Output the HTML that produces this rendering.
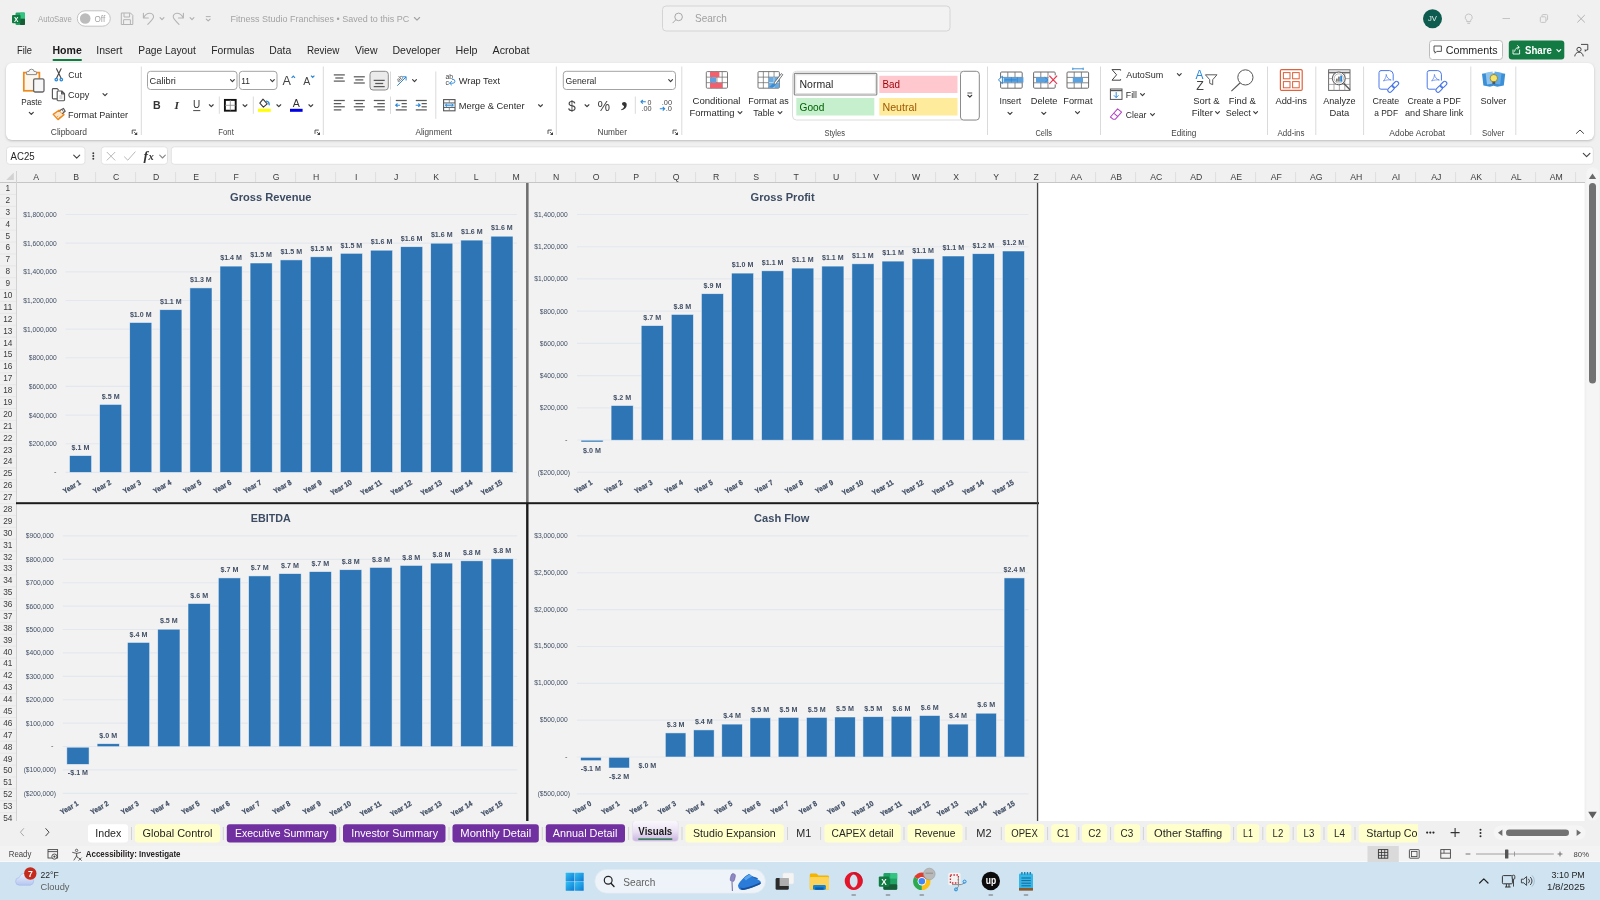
<!DOCTYPE html>
<html lang="en"><head><meta charset="utf-8"><title>Fitness Studio Franchises - Excel</title>
<style>
html,body{margin:0;padding:0;background:#f0f0f0;overflow:hidden}
body{width:1600px;height:900px;position:relative;font-family:"Liberation Sans", sans-serif;}
#app{position:absolute;left:0;top:0;width:1600px;height:900px;background:#f0f0f0;overflow:hidden}
#ribbon{position:absolute;left:6px;top:63px;width:1588px;height:76.5px;background:#fff;border-radius:6px;box-shadow:0 1px 2.5px rgba(0,0,0,.22)}
#status{position:absolute;left:0;top:846px;width:1600px;height:16px;background:#f3f3f3}
#taskbar{position:absolute;left:0;top:861px;width:1600px;height:39px;background:#cfe3f1;border-top:1.4px solid #f8f9fa;box-sizing:border-box}
svg{position:absolute;left:0;top:0;will-change:transform}
svg text{font-family:"Liberation Sans", sans-serif;white-space:pre}
</style></head><body>
<div id="app">
<div id="ribbon"></div><div id="status"></div><div id="taskbar"></div>
<svg width="1600" height="900" viewBox="0 0 1600 900">
<rect x="15.50" y="12.50" width="9.50" height="12.50" fill="#21a366" rx="1.2" />
<rect x="20.00" y="12.50" width="5.00" height="6.20" fill="#33c481" rx="1" />
<rect x="20.00" y="18.70" width="5.00" height="6.30" fill="#185c37" rx="1" />
<rect x="12.00" y="15.00" width="8.60" height="8.20" fill="#107c41" rx="1" />
<text x="16.30" y="21.70" font-size="6.6" fill="#fff" text-anchor="middle" font-weight="bold" >X</text>
<text x="38.00" y="22.30" font-size="9.4" fill="#a3a3a3" textLength="33.70" lengthAdjust="spacingAndGlyphs" >AutoSave</text>
<rect x="77.30" y="10.80" width="33.00" height="15.40" fill="#ffffff" rx="7.7" stroke="#c2c2c2" stroke-width="1" />
<circle cx="85.20" cy="18.50" r="5.3" fill="#bcbcbc"/>
<text x="94.50" y="21.90" font-size="8.8" fill="#a3a3a3" textLength="10.70" lengthAdjust="spacingAndGlyphs" >Off</text>
<path d="M121.3 13 h9.2 l2.3 2.3 v9.2 h-11.5 z" fill="none" stroke="#b3b3b3" stroke-width="1" stroke-linejoin="round"/>
<path d="M124 13.2 v3.8 h5.6 v-3.8 M123.6 24.3 v-4.6 h6.8 v4.6" fill="none" stroke="#b3b3b3" stroke-width="1" />
<path d="M143.4 13.3 v4.7 h4.9 M143.5 18 C145 15 147.5 13.2 150 13.3 C152.6 13.4 154.1 15.6 153.4 17.6 C152.8 19.3 150 22 147.8 24.3" fill="none" stroke="#b4b4b4" stroke-width="1.1" stroke-linecap="round" stroke-linejoin="round"/>
<path d="M160.10 17.65 L162.00 19.55 L163.90 17.65" fill="none" stroke="#b0b0b0" stroke-width="1.15" stroke-linecap="round" stroke-linejoin="round"/>
<path d="M183.4 13.3 v4.7 h-4.9 M183.3 18 C181.8 15 179.3 13.2 176.8 13.3 C174.2 13.4 172.7 15.6 173.4 17.6 C174 19.3 176.8 22 179 24.3" fill="none" stroke="#b4b4b4" stroke-width="1.1" stroke-linecap="round" stroke-linejoin="round"/>
<path d="M190.10 17.65 L192.00 19.55 L193.90 17.65" fill="none" stroke="#b0b0b0" stroke-width="1.15" stroke-linecap="round" stroke-linejoin="round"/>
<line x1="205.80" y1="16.60" x2="210.60" y2="16.60" stroke="#b0b0b0" stroke-width="1" />
<path d="M206.30 19.05 L208.20 20.95 L210.10 19.05" fill="none" stroke="#b0b0b0" stroke-width="1.15" stroke-linecap="round" stroke-linejoin="round"/>
<text x="230.50" y="22.30" font-size="9.4" fill="#a3a3a3" textLength="178.80" lengthAdjust="spacingAndGlyphs" >Fitness Studio Franchises • Saved to this PC</text>
<path d="M414.40 17.50 L417.00 20.10 L419.60 17.50" fill="none" stroke="#a3a3a3" stroke-width="1.15" stroke-linecap="round" stroke-linejoin="round"/>
<rect x="662.50" y="6.00" width="287.50" height="25.00" fill="#f2f2f2" rx="3.5" stroke="#d4d4d4" stroke-width="1" />
<circle cx="678.60" cy="16.90" r="3.8" fill="none" stroke="#a8a8a8" stroke-width="1"/>
<line x1="675.90" y1="19.70" x2="672.60" y2="23.10" stroke="#a8a8a8" stroke-width="1" />
<text x="695.00" y="21.80" font-size="10.2" fill="#a0a0a0" textLength="31.70" lengthAdjust="spacingAndGlyphs" >Search</text>
<circle cx="1432.50" cy="18.80" r="9.5" fill="#0e5c4f"/>
<text x="1428.00" y="21.40" font-size="6.6" fill="#e8f2ef" textLength="9.00" lengthAdjust="spacingAndGlyphs" >JV</text>
<path d="M1468.7 14 a3.4 3.4 0 0 1 2 6.2 v1.4 h-4 v-1.4 a3.4 3.4 0 0 1 2 -6.2 z M1467.3 23.3 h2.8" fill="none" stroke="#c2c2c2" stroke-width="1" />
<line x1="1502.50" y1="18.50" x2="1510.00" y2="18.50" stroke="#c4c4c4" stroke-width="1" />
<rect x="1540.30" y="16.80" width="5.60" height="5.60" fill="none" rx="1" stroke="#c4c4c4" stroke-width="1" />
<path d="M1542 16.6 v-1 a1 1 0 0 1 1 -1 h3.6 a1 1 0 0 1 1 1 v3.6 a1 1 0 0 1 -1 1 h-0.8" fill="none" stroke="#c4c4c4" stroke-width="1" />
<path d="M1577.4 15 l7.4 7.4 M1584.8 15 l-7.4 7.4" fill="none" stroke="#b0b0b0" stroke-width="1" />
<text x="17.00" y="54.30" font-size="10.6" fill="#262626" textLength="15.00" lengthAdjust="spacingAndGlyphs" >File</text>
<text x="52.50" y="54.30" font-size="10.6" fill="#1a1a1a" font-weight="bold" textLength="29.30" lengthAdjust="spacingAndGlyphs" >Home</text>
<rect x="52.50" y="59.00" width="29.50" height="2.00" fill="#107c41" rx="1" />
<text x="96.30" y="54.30" font-size="10.6" fill="#262626" textLength="26.20" lengthAdjust="spacingAndGlyphs" >Insert</text>
<text x="138.30" y="54.30" font-size="10.6" fill="#262626" textLength="57.50" lengthAdjust="spacingAndGlyphs" >Page Layout</text>
<text x="211.30" y="54.30" font-size="10.6" fill="#262626" textLength="43.00" lengthAdjust="spacingAndGlyphs" >Formulas</text>
<text x="269.30" y="54.30" font-size="10.6" fill="#262626" textLength="22.00" lengthAdjust="spacingAndGlyphs" >Data</text>
<text x="307.00" y="54.30" font-size="10.6" fill="#262626" textLength="32.30" lengthAdjust="spacingAndGlyphs" >Review</text>
<text x="355.00" y="54.30" font-size="10.6" fill="#262626" textLength="22.50" lengthAdjust="spacingAndGlyphs" >View</text>
<text x="392.50" y="54.30" font-size="10.6" fill="#262626" textLength="48.00" lengthAdjust="spacingAndGlyphs" >Developer</text>
<text x="455.50" y="54.30" font-size="10.6" fill="#262626" textLength="22.00" lengthAdjust="spacingAndGlyphs" >Help</text>
<text x="492.50" y="54.30" font-size="10.6" fill="#262626" textLength="37.00" lengthAdjust="spacingAndGlyphs" >Acrobat</text>
<rect x="1429.50" y="40.50" width="73.00" height="19.00" fill="#fff" rx="3" stroke="#bcbcbc" stroke-width="1" />
<path d="M1434 46 h7.4 v5.4 h-4.6 l-1.8 1.8 v-1.8 h-1 z" fill="none" stroke="#444" stroke-width="0.9" stroke-linejoin="round"/>
<text x="1445.80" y="53.80" font-size="10.4" fill="#262626" textLength="51.70" lengthAdjust="spacingAndGlyphs" >Comments</text>
<rect x="1508.80" y="40.50" width="55.50" height="19.00" fill="#137a43" rx="3" />
<path d="M1513 50 v4 h6.6 v-4 M1514.6 51.2 c0.6 -2.6 2 -3.8 4.2 -3.8 M1517.6 45.6 l1.6 1.8 l-1.8 1.6" fill="none" stroke="#fff" stroke-width="0.9" stroke-linecap="round" stroke-linejoin="round"/>
<text x="1525.00" y="53.80" font-size="10.4" fill="#fff" font-weight="bold" textLength="26.80" lengthAdjust="spacingAndGlyphs" >Share</text>
<path d="M1556.90 49.65 L1558.80 51.55 L1560.70 49.65" fill="none" stroke="#fff" stroke-width="1.15" stroke-linecap="round" stroke-linejoin="round"/>
<circle cx="1579.00" cy="49.40" r="2.1" fill="none" stroke="#333" stroke-width="0.9"/>
<path d="M1574.8 56.4 a4.2 4.2 0 0 1 8.4 0" fill="none" stroke="#333" stroke-width="0.9" />
<path d="M1581 44.4 h6.8 v5.4 h-1.2 l-1.3 1.5 v-1.5 h-0.6" fill="none" stroke="#333" stroke-width="0.9" stroke-linejoin="round"/>
<rect x="23.80" y="72.60" width="15.60" height="18.20" fill="#fdf6ec" stroke="#ee8a1d" stroke-width="1.7" />
<path d="M26.6 74.6 v-2.2 a1 1 0 0 1 1 -1 h1.4 a2.5 2.2 0 0 1 5 0 h1.4 a1 1 0 0 1 1 1 v2.2 z" fill="#f6f6f6" stroke="#8a8a8a" stroke-width="1" />
<rect x="33.60" y="78.80" width="10.40" height="13.20" fill="#f7f7f7" rx="1.4" stroke="#666666" stroke-width="1.3" />
<text x="21.30" y="104.80" font-size="9.6" fill="#2b2b2b" textLength="20.70" lengthAdjust="spacingAndGlyphs" >Paste</text>
<path d="M29.30 112.30 L31.30 114.30 L33.30 112.30" fill="none" stroke="#3a3a3a" stroke-width="1.15" stroke-linecap="round" stroke-linejoin="round"/>
<path d="M56.5 68.8 l4.4 9 M61.1 68.8 l-4.4 9" fill="none" stroke="#4a4a4a" stroke-width="1.15" stroke-linecap="round"/>
<circle cx="56.30" cy="79.60" r="1.25" fill="none" stroke="#2b88d8" stroke-width="1.3"/>
<circle cx="61.30" cy="79.60" r="1.25" fill="none" stroke="#2b88d8" stroke-width="1.3"/>
<text x="68.30" y="78.30" font-size="9.6" fill="#2b2b2b" textLength="13.50" lengthAdjust="spacingAndGlyphs" >Cut</text>
<path d="M56.6 98.8 h-3.4 a0.8 0.8 0 0 1 -0.8 -0.8 v-8.6 a0.8 0.8 0 0 1 0.8 -0.8 h4 l1.2 1.2" fill="none" stroke="#555" stroke-width="1.15" stroke-linejoin="round" stroke-linecap="round"/>
<path d="M58 91 h3.8 l2.7 2.7 v6.2 a0.8 0.8 0 0 1 -0.8 0.8 h-5.7 a0.8 0.8 0 0 1 -0.8 -0.8 v-8.1 a0.8 0.8 0 0 1 0.8 -0.8 z M61.6 91.2 v2.7 h2.7" fill="#fff" stroke="#555" stroke-width="1.15" stroke-linejoin="round"/>
<path d="M59.4 96 h3 M59.4 98 h3" fill="none" stroke="#9a9a9a" stroke-width="0.8" />
<text x="68.00" y="98.00" font-size="9.6" fill="#2b2b2b" textLength="21.30" lengthAdjust="spacingAndGlyphs" >Copy</text>
<path d="M103.00 93.60 L105.00 95.60 L107.00 93.60" fill="none" stroke="#3a3a3a" stroke-width="1.15" stroke-linecap="round" stroke-linejoin="round"/>
<path d="M53.2 114.4 l5.8 -4.2 l5 4.4 l-6 5 z" fill="#fbe5cb" stroke="#ee8a1d" stroke-width="1.4" stroke-linejoin="round"/>
<path d="M56.6 117.4 l1.6 -1.4 M58.8 118.2 l1.6 -1.4" fill="none" stroke="#ee8a1d" stroke-width="0.8" />
<path d="M59.8 110.4 l3.6 -2 l1.8 2.8 l-3 2.4" fill="#fff" stroke="#555" stroke-width="1.1" stroke-linejoin="round"/>
<path d="M62 109.4 l1.4 2.4" fill="none" stroke="#555" stroke-width="0.8" />
<text x="68.00" y="117.60" font-size="9.6" fill="#2b2b2b" textLength="60.00" lengthAdjust="spacingAndGlyphs" >Format Painter</text>
<text x="50.80" y="135.20" font-size="8.9" fill="#444444" textLength="36.20" lengthAdjust="spacingAndGlyphs" >Clipboard</text>
<path d="M132.2 133.9 v-3.8 h3.8" fill="none" stroke="#444" stroke-width="0.9" />
<path d="M134.0 131.9 l3 3" fill="none" stroke="#444" stroke-width="0.9" />
<path d="M137.2 132.1 v3 h-3 z" fill="#444" />
<line x1="141.30" y1="66.50" x2="141.30" y2="135.00" stroke="#dadada" stroke-width="1" />
<rect x="147.50" y="71.30" width="89.50" height="18.20" fill="#fff" rx="3" stroke="#a3a3a3" stroke-width="1" />
<text x="149.60" y="84.30" font-size="9.6" fill="#2b2b2b" textLength="26.20" lengthAdjust="spacingAndGlyphs" >Calibri</text>
<path d="M230.50 79.65 L232.40 81.55 L234.30 79.65" fill="none" stroke="#3a3a3a" stroke-width="1.15" stroke-linecap="round" stroke-linejoin="round"/>
<rect x="239.30" y="71.30" width="37.70" height="18.20" fill="#fff" rx="3" stroke="#a3a3a3" stroke-width="1" />
<text x="241.30" y="84.30" font-size="9.6" fill="#2b2b2b" textLength="8.70" lengthAdjust="spacingAndGlyphs" >11</text>
<path d="M270.50 79.65 L272.40 81.55 L274.30 79.65" fill="none" stroke="#3a3a3a" stroke-width="1.15" stroke-linecap="round" stroke-linejoin="round"/>
<text x="282.40" y="85.20" font-size="12.6" fill="#444" >A</text>
<path d="M291.6 77.8 l1.7 -1.8 l1.7 1.8" fill="none" stroke="#2b88d8" stroke-width="1.2" />
<text x="303.20" y="85.20" font-size="10.6" fill="#444" >A</text>
<path d="M311 75.6 l1.7 1.8 l1.7 -1.8" fill="none" stroke="#2b88d8" stroke-width="1.2" />
<text x="156.80" y="109.00" font-size="10.6" fill="#333" text-anchor="middle" font-weight="bold" >B</text>
<text x="176.60" y="109.00" font-size="11.4" fill="#333" text-anchor="middle" font-weight="bold" font-style="italic" style='font-family:"Liberation Serif", serif' >I</text>
<text x="196.70" y="108.40" font-size="10" fill="#333" text-anchor="middle" >U</text>
<line x1="193.20" y1="110.60" x2="200.30" y2="110.60" stroke="#333" stroke-width="0.9" />
<path d="M209.40 104.75 L211.30 106.65 L213.20 104.75" fill="none" stroke="#3a3a3a" stroke-width="1.15" stroke-linecap="round" stroke-linejoin="round"/>
<line x1="219.30" y1="96.50" x2="219.30" y2="113.80" stroke="#dadada" stroke-width="1" />
<rect x="224.90" y="99.90" width="10.80" height="10.80" fill="none" stroke="#111" stroke-width="1.9" />
<line x1="230.30" y1="100.00" x2="230.30" y2="110.60" stroke="#8a8a8a" stroke-width="0.8" />
<line x1="225.00" y1="105.30" x2="235.60" y2="105.30" stroke="#8a8a8a" stroke-width="0.8" />
<path d="M243.10 104.75 L245.00 106.65 L246.90 104.75" fill="none" stroke="#3a3a3a" stroke-width="1.15" stroke-linecap="round" stroke-linejoin="round"/>
<line x1="253.30" y1="96.50" x2="253.30" y2="113.80" stroke="#dadada" stroke-width="1" />
<path d="M263 99.2 l4.2 4.6 l-3.8 3.4 l-3.6 -4 z" fill="none" stroke="#3a3a3a" stroke-width="1.1" stroke-linejoin="round"/>
<path d="M266.4 101.2 c1.8 0.2 2.8 1.4 2.8 3.6" fill="none" stroke="#2b88d8" stroke-width="1.3" stroke-linecap="round"/>
<rect x="258.00" y="108.80" width="12.80" height="3.00" fill="#ffff00" />
<path d="M276.90 104.75 L278.80 106.65 L280.70 104.75" fill="none" stroke="#3a3a3a" stroke-width="1.15" stroke-linecap="round" stroke-linejoin="round"/>
<text x="296.20" y="107.20" font-size="10.6" fill="#333" text-anchor="middle" >A</text>
<rect x="290.00" y="108.80" width="12.60" height="3.00" fill="#0000e6" />
<path d="M308.90 104.75 L310.80 106.65 L312.70 104.75" fill="none" stroke="#3a3a3a" stroke-width="1.15" stroke-linecap="round" stroke-linejoin="round"/>
<text x="218.30" y="135.20" font-size="8.9" fill="#444444" textLength="15.50" lengthAdjust="spacingAndGlyphs" >Font</text>
<path d="M315.0 133.9 v-3.8 h3.8" fill="none" stroke="#444" stroke-width="0.9" />
<path d="M316.8 131.9 l3 3" fill="none" stroke="#444" stroke-width="0.9" />
<path d="M320.0 132.1 v3 h-3 z" fill="#444" />
<line x1="323.30" y1="66.50" x2="323.30" y2="135.00" stroke="#dadada" stroke-width="1" />
<line x1="333.80" y1="74.90" x2="344.80" y2="74.90" stroke="#5a5a5a" stroke-width="1.25" />
<line x1="335.30" y1="78.00" x2="343.30" y2="78.00" stroke="#5a5a5a" stroke-width="1.25" />
<line x1="333.80" y1="81.10" x2="344.80" y2="81.10" stroke="#5a5a5a" stroke-width="1.25" />
<line x1="353.80" y1="76.80" x2="364.80" y2="76.80" stroke="#5a5a5a" stroke-width="1.25" />
<line x1="355.30" y1="79.90" x2="363.30" y2="79.90" stroke="#5a5a5a" stroke-width="1.25" />
<line x1="353.80" y1="83.00" x2="364.80" y2="83.00" stroke="#5a5a5a" stroke-width="1.25" />
<rect x="370.00" y="71.30" width="18.30" height="18.70" fill="#ebebeb" rx="3" stroke="#8a8a8a" stroke-width="1" />
<line x1="373.70" y1="80.40" x2="384.70" y2="80.40" stroke="#5a5a5a" stroke-width="1.25" />
<line x1="375.20" y1="83.50" x2="383.20" y2="83.50" stroke="#5a5a5a" stroke-width="1.25" />
<line x1="373.70" y1="86.60" x2="384.70" y2="86.60" stroke="#5a5a5a" stroke-width="1.25" />
<line x1="390.50" y1="71.50" x2="390.50" y2="89.50" stroke="#dadada" stroke-width="1" />
<text x="396.20" y="81.50" font-size="6.6" fill="#555" transform="rotate(-42 399 79)">ab</text>
<path d="M397.5 85.5 l8.4 -8.4 M402.8 76.8 h3.3 v3.3" fill="none" stroke="#2b88d8" stroke-width="1" stroke-linecap="round" stroke-linejoin="round"/>
<path d="M412.60 79.65 L414.50 81.55 L416.40 79.65" fill="none" stroke="#3a3a3a" stroke-width="1.15" stroke-linecap="round" stroke-linejoin="round"/>
<line x1="435.80" y1="71.50" x2="435.80" y2="118.80" stroke="#dadada" stroke-width="1" />
<text x="445.40" y="79.00" font-size="6.8" fill="#444" >ab</text>
<text x="445.40" y="85.20" font-size="6.8" fill="#444" >c</text>
<path d="M449.6 83.2 h3.4 a1.9 1.9 0 0 0 0 -3.8 h-0.6 M451.6 81.4 l-2 1.8 l2 1.8" fill="none" stroke="#2b88d8" stroke-width="0.9" stroke-linecap="round" stroke-linejoin="round"/>
<text x="458.80" y="84.30" font-size="9.6" fill="#2b2b2b" textLength="41.20" lengthAdjust="spacingAndGlyphs" >Wrap Text</text>
<line x1="333.80" y1="100.50" x2="344.80" y2="100.50" stroke="#5a5a5a" stroke-width="1.25" />
<line x1="333.80" y1="103.63" x2="341.30" y2="103.63" stroke="#5a5a5a" stroke-width="1.25" />
<line x1="333.80" y1="106.77" x2="344.80" y2="106.77" stroke="#5a5a5a" stroke-width="1.25" />
<line x1="333.80" y1="109.89" x2="341.30" y2="109.89" stroke="#5a5a5a" stroke-width="1.25" />
<line x1="353.80" y1="100.50" x2="364.80" y2="100.50" stroke="#5a5a5a" stroke-width="1.25" />
<line x1="355.55" y1="103.63" x2="363.05" y2="103.63" stroke="#5a5a5a" stroke-width="1.25" />
<line x1="353.80" y1="106.77" x2="364.80" y2="106.77" stroke="#5a5a5a" stroke-width="1.25" />
<line x1="355.55" y1="109.89" x2="363.05" y2="109.89" stroke="#5a5a5a" stroke-width="1.25" />
<line x1="373.80" y1="100.50" x2="384.80" y2="100.50" stroke="#5a5a5a" stroke-width="1.25" />
<line x1="377.30" y1="103.63" x2="384.80" y2="103.63" stroke="#5a5a5a" stroke-width="1.25" />
<line x1="373.80" y1="106.77" x2="384.80" y2="106.77" stroke="#5a5a5a" stroke-width="1.25" />
<line x1="377.30" y1="109.89" x2="384.80" y2="109.89" stroke="#5a5a5a" stroke-width="1.25" />
<line x1="390.50" y1="96.50" x2="390.50" y2="113.80" stroke="#dadada" stroke-width="1" />
<line x1="395.80" y1="100.50" x2="406.80" y2="100.50" stroke="#5a5a5a" stroke-width="1.25" />
<line x1="401.60" y1="103.60" x2="406.80" y2="103.60" stroke="#5a5a5a" stroke-width="1.25" />
<line x1="401.60" y1="106.80" x2="406.80" y2="106.80" stroke="#5a5a5a" stroke-width="1.25" />
<line x1="395.80" y1="109.90" x2="406.80" y2="109.90" stroke="#5a5a5a" stroke-width="1.25" />
<path d="M400.1 105.2 h-4.2 M397.5 103.5 l-1.8 1.7 l1.8 1.7" fill="none" stroke="#2b88d8" stroke-width="1.15" />
<line x1="415.80" y1="100.50" x2="426.80" y2="100.50" stroke="#5a5a5a" stroke-width="1.25" />
<line x1="421.60" y1="103.60" x2="426.80" y2="103.60" stroke="#5a5a5a" stroke-width="1.25" />
<line x1="421.60" y1="106.80" x2="426.80" y2="106.80" stroke="#5a5a5a" stroke-width="1.25" />
<line x1="415.80" y1="109.90" x2="426.80" y2="109.90" stroke="#5a5a5a" stroke-width="1.25" />
<path d="M415.7 105.2 h4.2 M418.3 103.5 l1.8 1.7 l-1.8 1.7" fill="none" stroke="#2b88d8" stroke-width="1.15" />
<rect x="443.60" y="99.60" width="11.40" height="11.20" fill="#fff" stroke="#555" stroke-width="1.1" />
<rect x="444.20" y="103.10" width="10.20" height="4.20" fill="#d6e9f8" />
<line x1="443.60" y1="102.90" x2="455.00" y2="102.90" stroke="#555" stroke-width="0.9" />
<line x1="443.60" y1="107.50" x2="455.00" y2="107.50" stroke="#555" stroke-width="0.9" />
<line x1="449.30" y1="99.60" x2="449.30" y2="102.90" stroke="#777" stroke-width="0.8" />
<line x1="449.30" y1="107.50" x2="449.30" y2="110.80" stroke="#777" stroke-width="0.8" />
<path d="M445.4 105.2 h7.8 M447 103.8 l-1.6 1.4 l1.6 1.4 M451.6 103.8 l1.6 1.4 l-1.6 1.4" fill="none" stroke="#2b88d8" stroke-width="1" />
<text x="458.80" y="109.30" font-size="9.6" fill="#2b2b2b" textLength="65.70" lengthAdjust="spacingAndGlyphs" >Merge &amp; Center</text>
<path d="M538.60 104.75 L540.50 106.65 L542.40 104.75" fill="none" stroke="#3a3a3a" stroke-width="1.15" stroke-linecap="round" stroke-linejoin="round"/>
<text x="415.50" y="135.20" font-size="8.9" fill="#444444" textLength="36.30" lengthAdjust="spacingAndGlyphs" >Alignment</text>
<path d="M548.0 133.9 v-3.8 h3.8" fill="none" stroke="#444" stroke-width="0.9" />
<path d="M549.8 131.9 l3 3" fill="none" stroke="#444" stroke-width="0.9" />
<path d="M553.0 132.1 v3 h-3 z" fill="#444" />
<line x1="556.30" y1="66.50" x2="556.30" y2="135.00" stroke="#dadada" stroke-width="1" />
<rect x="563.30" y="71.30" width="112.20" height="18.20" fill="#fff" rx="3" stroke="#a3a3a3" stroke-width="1" />
<text x="565.50" y="84.30" font-size="9.6" fill="#2b2b2b" textLength="30.80" lengthAdjust="spacingAndGlyphs" >General</text>
<path d="M668.70 79.65 L670.60 81.55 L672.50 79.65" fill="none" stroke="#3a3a3a" stroke-width="1.15" stroke-linecap="round" stroke-linejoin="round"/>
<text x="572.00" y="110.60" font-size="14" fill="#454545" text-anchor="middle" >$</text>
<path d="M585.10 104.75 L587.00 106.65 L588.90 104.75" fill="none" stroke="#3a3a3a" stroke-width="1.15" stroke-linecap="round" stroke-linejoin="round"/>
<text x="597.60" y="110.80" font-size="14.6" fill="#454545" textLength="12.60" lengthAdjust="spacingAndGlyphs" >%</text>
<text x="624.40" y="106.40" font-size="27" fill="#333" text-anchor="middle" font-weight="bold" style='font-family:"Liberation Serif", serif' >,</text>
<line x1="635.30" y1="96.50" x2="635.30" y2="113.80" stroke="#dadada" stroke-width="1" />
<path d="M641 101.8 h4.8 M642.8 100 l-1.8 1.8 l1.8 1.8" fill="none" stroke="#2b88d8" stroke-width="1.1" />
<text x="647.40" y="104.60" font-size="7" fill="#444" >0</text>
<text x="641.40" y="111.40" font-size="7" fill="#444" textLength="10.20" lengthAdjust="spacingAndGlyphs" >.00</text>
<text x="661.80" y="104.60" font-size="7" fill="#444" textLength="10.20" lengthAdjust="spacingAndGlyphs" >.00</text>
<path d="M659.8 108.8 h4.8 M662.8 107 l1.8 1.8 l-1.8 1.8" fill="none" stroke="#2b88d8" stroke-width="1.1" />
<text x="665.80" y="111.40" font-size="7" fill="#444" textLength="6.20" lengthAdjust="spacingAndGlyphs" >.0</text>
<text x="597.50" y="135.20" font-size="8.9" fill="#444444" textLength="29.50" lengthAdjust="spacingAndGlyphs" >Number</text>
<path d="M673.0 133.9 v-3.8 h3.8" fill="none" stroke="#444" stroke-width="0.9" />
<path d="M674.8 131.9 l3 3" fill="none" stroke="#444" stroke-width="0.9" />
<path d="M678.0 132.1 v3 h-3 z" fill="#444" />
<line x1="681.80" y1="66.50" x2="681.80" y2="135.00" stroke="#dadada" stroke-width="1" />
<rect x="706.30" y="71.60" width="21.20" height="16.60" fill="#fff" rx="1" stroke="#6a6a6a" stroke-width="0.9" />
<line x1="711.60" y1="71.60" x2="711.60" y2="88.20" stroke="#6a6a6a" stroke-width="0.7200000000000001" />
<line x1="716.90" y1="71.60" x2="716.90" y2="88.20" stroke="#6a6a6a" stroke-width="0.7200000000000001" />
<line x1="722.20" y1="71.60" x2="722.20" y2="88.20" stroke="#6a6a6a" stroke-width="0.7200000000000001" />
<line x1="706.30" y1="77.13" x2="727.50" y2="77.13" stroke="#6a6a6a" stroke-width="0.7200000000000001" />
<line x1="706.30" y1="82.67" x2="727.50" y2="82.67" stroke="#6a6a6a" stroke-width="0.7200000000000001" />
<rect x="710.00" y="71.80" width="9.40" height="5.30" fill="#f0606d" />
<rect x="710.00" y="77.30" width="6.00" height="5.40" fill="#5fa2dd" />
<rect x="710.00" y="82.90" width="12.40" height="5.20" fill="#f0606d" />
<text x="692.50" y="103.80" font-size="9.6" fill="#2b2b2b" textLength="48.00" lengthAdjust="spacingAndGlyphs" >Conditional</text>
<text x="689.50" y="116.30" font-size="9.6" fill="#2b2b2b" textLength="45.00" lengthAdjust="spacingAndGlyphs" >Formatting</text>
<path d="M738.10 111.65 L740.00 113.55 L741.90 111.65" fill="none" stroke="#3a3a3a" stroke-width="1.15" stroke-linecap="round" stroke-linejoin="round"/>
<rect x="758.00" y="71.60" width="21.40" height="16.60" fill="#fff" rx="1" stroke="#6a6a6a" stroke-width="0.9" />
<line x1="763.35" y1="71.60" x2="763.35" y2="88.20" stroke="#6a6a6a" stroke-width="0.7200000000000001" />
<line x1="768.70" y1="71.60" x2="768.70" y2="88.20" stroke="#6a6a6a" stroke-width="0.7200000000000001" />
<line x1="774.05" y1="71.60" x2="774.05" y2="88.20" stroke="#6a6a6a" stroke-width="0.7200000000000001" />
<line x1="758.00" y1="77.13" x2="779.40" y2="77.13" stroke="#6a6a6a" stroke-width="0.7200000000000001" />
<line x1="758.00" y1="82.67" x2="779.40" y2="82.67" stroke="#6a6a6a" stroke-width="0.7200000000000001" />
<rect x="768.80" y="77.20" width="10.40" height="10.80" fill="#4f9ede" opacity="0.85"/>
<line x1="774.00" y1="77.20" x2="774.00" y2="88.00" stroke="#fff" stroke-width="0.6" />
<line x1="768.80" y1="82.60" x2="779.20" y2="82.60" stroke="#fff" stroke-width="0.6" />
<path d="M781.4 73.6 l-7.6 9.6 l1.6 1.3 l7.4 -9.8 z" fill="#fff" stroke="#555" stroke-width="0.8" stroke-linejoin="round"/>
<path d="M773.6 83.4 c-2.2 0.2 -2.2 2.6 -4.6 3.4 c2.4 1.2 5.6 0.6 6.4 -2 z" fill="#3b8ad4" />
<text x="748.30" y="103.80" font-size="9.6" fill="#2b2b2b" textLength="40.50" lengthAdjust="spacingAndGlyphs" >Format as</text>
<text x="753.30" y="116.30" font-size="9.6" fill="#2b2b2b" textLength="21.20" lengthAdjust="spacingAndGlyphs" >Table</text>
<path d="M778.10 111.65 L780.00 113.55 L781.90 111.65" fill="none" stroke="#3a3a3a" stroke-width="1.15" stroke-linecap="round" stroke-linejoin="round"/>
<rect x="792.50" y="71.30" width="186.80" height="48.70" fill="#fff" rx="4" stroke="#dcdcdc" stroke-width="1" />
<rect x="794.30" y="73.30" width="82.50" height="21.70" fill="#fff" rx="1" stroke="#8c8c8c" stroke-width="1.2" />
<rect x="795.80" y="74.80" width="79.50" height="18.70" fill="#fff" stroke="#d9d9d9" stroke-width="0.8" />
<text x="799.50" y="88.00" font-size="10.8" fill="#1f1f1f" textLength="33.80" lengthAdjust="spacingAndGlyphs" >Normal</text>
<rect x="879.30" y="75.80" width="78.20" height="17.20" fill="#ffc7ce" />
<text x="882.50" y="88.00" font-size="10.8" fill="#9c0006" textLength="17.50" lengthAdjust="spacingAndGlyphs" >Bad</text>
<rect x="796.30" y="98.00" width="78.00" height="17.50" fill="#c6efce" />
<text x="799.50" y="111.20" font-size="10.8" fill="#006100" textLength="24.80" lengthAdjust="spacingAndGlyphs" >Good</text>
<rect x="879.30" y="98.00" width="78.20" height="17.50" fill="#ffeb9c" />
<text x="882.50" y="111.20" font-size="10.8" fill="#9c5700" textLength="34.30" lengthAdjust="spacingAndGlyphs" >Neutral</text>
<rect x="960.50" y="71.30" width="18.80" height="48.70" fill="#fff" rx="3" stroke="#8c8c8c" stroke-width="1" />
<line x1="967.40" y1="93.00" x2="972.20" y2="93.00" stroke="#444" stroke-width="0.9" />
<path d="M967.90 95.25 L969.80 97.15 L971.70 95.25" fill="none" stroke="#3a3a3a" stroke-width="1.15" stroke-linecap="round" stroke-linejoin="round"/>
<text x="824.50" y="135.60" font-size="8.9" fill="#444444" textLength="20.50" lengthAdjust="spacingAndGlyphs" >Styles</text>
<line x1="987.50" y1="66.50" x2="987.50" y2="135.00" stroke="#dadada" stroke-width="1" />
<rect x="1000.60" y="72.00" width="21.60" height="16.20" fill="#fff" rx="1" stroke="#6a6a6a" stroke-width="1" />
<line x1="1007.80" y1="72.00" x2="1007.80" y2="88.20" stroke="#6a6a6a" stroke-width="0.8" />
<line x1="1015.00" y1="72.00" x2="1015.00" y2="88.20" stroke="#6a6a6a" stroke-width="0.8" />
<line x1="1000.60" y1="77.40" x2="1022.20" y2="77.40" stroke="#6a6a6a" stroke-width="0.8" />
<line x1="1000.60" y1="82.80" x2="1022.20" y2="82.80" stroke="#6a6a6a" stroke-width="0.8" />
<rect x="1003.60" y="77.20" width="19.80" height="5.40" fill="#5ba1de" />
<path d="M1004.6 79.9 h12 M1002.4 76.2 l-4 3.7 l4 3.7 z" fill="#fff" stroke="#2b88d8" stroke-width="1" stroke-linejoin="round"/>
<line x1="1011.40" y1="77.20" x2="1011.40" y2="82.60" stroke="#2f7fc6" stroke-width="0.6" />
<line x1="1017.40" y1="77.20" x2="1017.40" y2="82.60" stroke="#2f7fc6" stroke-width="0.6" />
<text x="999.50" y="104.40" font-size="9.6" fill="#2b2b2b" textLength="21.80" lengthAdjust="spacingAndGlyphs" >Insert</text>
<path d="M1008.00 112.30 L1010.00 114.30 L1012.00 112.30" fill="none" stroke="#3a3a3a" stroke-width="1.15" stroke-linecap="round" stroke-linejoin="round"/>
<rect x="1033.60" y="72.00" width="21.60" height="16.20" fill="#fff" rx="1" stroke="#6a6a6a" stroke-width="1" />
<line x1="1040.80" y1="72.00" x2="1040.80" y2="88.20" stroke="#6a6a6a" stroke-width="0.8" />
<line x1="1048.00" y1="72.00" x2="1048.00" y2="88.20" stroke="#6a6a6a" stroke-width="0.8" />
<line x1="1033.60" y1="77.40" x2="1055.20" y2="77.40" stroke="#6a6a6a" stroke-width="0.8" />
<line x1="1033.60" y1="82.80" x2="1055.20" y2="82.80" stroke="#6a6a6a" stroke-width="0.8" />
<rect x="1036.00" y="77.20" width="12.00" height="5.40" fill="#5ba1de" />
<path d="M1044.6 77.2 l3.4 2.7 l-3.4 2.7" fill="none" stroke="#2f7fc6" stroke-width="0.7" />
<rect x="1048.60" y="75.40" width="8.60" height="9.00" fill="#fff" />
<path d="M1049.6 76 l7.2 7.6 M1056.8 76 l-7.2 7.6" fill="none" stroke="#e8384f" stroke-width="1.1" stroke-linecap="round"/>
<text x="1030.80" y="104.40" font-size="9.6" fill="#2b2b2b" textLength="26.70" lengthAdjust="spacingAndGlyphs" >Delete</text>
<path d="M1041.80 112.30 L1043.80 114.30 L1045.80 112.30" fill="none" stroke="#3a3a3a" stroke-width="1.15" stroke-linecap="round" stroke-linejoin="round"/>
<path d="M1072.8 67.6 v2.4 M1072.8 68.8 h10.4 M1083.2 67.6 v2.4" fill="none" stroke="#2b88d8" stroke-width="0.9" />
<rect x="1067.00" y="72.00" width="21.60" height="16.20" fill="#fff" rx="1" stroke="#6a6a6a" stroke-width="1" />
<line x1="1074.20" y1="72.00" x2="1074.20" y2="88.20" stroke="#6a6a6a" stroke-width="0.8" />
<line x1="1081.40" y1="72.00" x2="1081.40" y2="88.20" stroke="#6a6a6a" stroke-width="0.8" />
<line x1="1067.00" y1="77.40" x2="1088.60" y2="77.40" stroke="#6a6a6a" stroke-width="0.8" />
<line x1="1067.00" y1="82.80" x2="1088.60" y2="82.80" stroke="#6a6a6a" stroke-width="0.8" />
<rect x="1072.80" y="77.20" width="10.20" height="5.40" fill="#5ba1de" />
<text x="1063.30" y="103.80" font-size="9.6" fill="#2b2b2b" textLength="29.20" lengthAdjust="spacingAndGlyphs" >Format</text>
<path d="M1075.50 111.60 L1077.50 113.60 L1079.50 111.60" fill="none" stroke="#3a3a3a" stroke-width="1.15" stroke-linecap="round" stroke-linejoin="round"/>
<text x="1035.50" y="135.60" font-size="8.9" fill="#444444" textLength="16.50" lengthAdjust="spacingAndGlyphs" >Cells</text>
<line x1="1100.50" y1="66.50" x2="1100.50" y2="135.00" stroke="#dadada" stroke-width="1" />
<path d="M1120.6 70.6 v-1 h-8.6 l4.6 5.2 l-4.6 5.4 h8.6 v-1" fill="none" stroke="#444" stroke-width="1" stroke-linejoin="round"/>
<text x="1126.30" y="78.00" font-size="9.6" fill="#2b2b2b" textLength="37.00" lengthAdjust="spacingAndGlyphs" >AutoSum</text>
<path d="M1177.40 73.65 L1179.30 75.55 L1181.20 73.65" fill="none" stroke="#3a3a3a" stroke-width="1.15" stroke-linecap="round" stroke-linejoin="round"/>
<rect x="1110.40" y="89.00" width="11.60" height="10.40" fill="#fff" stroke="#555" stroke-width="1" />
<line x1="1110.40" y1="90.60" x2="1122.00" y2="90.60" stroke="#555" stroke-width="1.2" />
<path d="M1116.2 92.4 v5 M1114.2 95.6 l2 2 l2 -2" fill="none" stroke="#2b88d8" stroke-width="0.95" stroke-linecap="round" stroke-linejoin="round"/>
<text x="1125.80" y="98.00" font-size="9.6" fill="#2b2b2b" textLength="11.20" lengthAdjust="spacingAndGlyphs" >Fill</text>
<path d="M1140.60 93.65 L1142.50 95.55 L1144.40 93.65" fill="none" stroke="#3a3a3a" stroke-width="1.15" stroke-linecap="round" stroke-linejoin="round"/>
<path d="M1117.6 108.8 l4 3.4 l-6.2 7 l-2.4 0 l-2.6 -2.2 z M1113.8 113.2 l4 3.4" fill="none" stroke="#b146c2" stroke-width="1.05" stroke-linejoin="round"/>
<text x="1125.80" y="118.00" font-size="9.6" fill="#2b2b2b" textLength="20.50" lengthAdjust="spacingAndGlyphs" >Clear</text>
<path d="M1150.60 113.65 L1152.50 115.55 L1154.40 113.65" fill="none" stroke="#3a3a3a" stroke-width="1.15" stroke-linecap="round" stroke-linejoin="round"/>
<text x="1195.40" y="79.00" font-size="12" fill="#2b88d8" textLength="8.00" lengthAdjust="spacingAndGlyphs" >A</text>
<text x="1196.20" y="90.30" font-size="12" fill="#444" textLength="7.60" lengthAdjust="spacingAndGlyphs" >Z</text>
<path d="M1205.4 74.8 h11.6 l-4.3 4.9 v5 l-3 -1.4 v-3.6 z" fill="none" stroke="#555" stroke-width="0.95" stroke-linejoin="round"/>
<text x="1193.30" y="103.80" font-size="9.6" fill="#2b2b2b" textLength="26.20" lengthAdjust="spacingAndGlyphs" >Sort &amp;</text>
<text x="1191.80" y="116.30" font-size="9.6" fill="#2b2b2b" textLength="21.20" lengthAdjust="spacingAndGlyphs" >Filter</text>
<path d="M1215.60 111.65 L1217.50 113.55 L1219.40 111.65" fill="none" stroke="#3a3a3a" stroke-width="1.15" stroke-linecap="round" stroke-linejoin="round"/>
<circle cx="1245.40" cy="77.40" r="7.6" fill="none" stroke="#555" stroke-width="1"/>
<line x1="1240.00" y1="83.00" x2="1231.40" y2="91.20" stroke="#555" stroke-width="1.1" />
<text x="1228.80" y="103.80" font-size="9.6" fill="#2b2b2b" textLength="27.00" lengthAdjust="spacingAndGlyphs" >Find &amp;</text>
<text x="1225.80" y="116.30" font-size="9.6" fill="#2b2b2b" textLength="25.00" lengthAdjust="spacingAndGlyphs" >Select</text>
<path d="M1253.70 111.65 L1255.60 113.55 L1257.50 111.65" fill="none" stroke="#3a3a3a" stroke-width="1.15" stroke-linecap="round" stroke-linejoin="round"/>
<text x="1171.30" y="135.60" font-size="8.9" fill="#444444" textLength="25.00" lengthAdjust="spacingAndGlyphs" >Editing</text>
<line x1="1267.50" y1="66.50" x2="1267.50" y2="135.00" stroke="#dadada" stroke-width="1" />
<rect x="1280.40" y="69.60" width="21.80" height="20.80" fill="none" rx="1.2" stroke="#e0613a" stroke-width="1.2" />
<rect x="1283.40" y="72.60" width="6.60" height="6.20" fill="none" stroke="#e0613a" stroke-width="1" />
<rect x="1292.60" y="72.60" width="6.60" height="6.20" fill="none" stroke="#e0613a" stroke-width="1" />
<rect x="1283.40" y="81.60" width="6.60" height="6.20" fill="none" stroke="#e0613a" stroke-width="1" />
<rect x="1292.60" y="81.60" width="6.60" height="6.20" fill="none" stroke="#e0613a" stroke-width="1" />
<text x="1275.50" y="103.80" font-size="9.6" fill="#2b2b2b" textLength="31.50" lengthAdjust="spacingAndGlyphs" >Add-ins</text>
<text x="1277.50" y="135.60" font-size="8.9" fill="#444444" textLength="27.00" lengthAdjust="spacingAndGlyphs" >Add-ins</text>
<line x1="1315.80" y1="66.50" x2="1315.80" y2="135.00" stroke="#dadada" stroke-width="1" />
<rect x="1328.60" y="69.80" width="21.40" height="20.60" fill="#fff" stroke="#6a6a6a" stroke-width="1" />
<line x1="1328.60" y1="72.60" x2="1350.00" y2="72.60" stroke="#6a6a6a" stroke-width="1.6" />
<line x1="1334.00" y1="73.00" x2="1334.00" y2="90.40" stroke="#8a8a8a" stroke-width="0.7" />
<line x1="1339.40" y1="73.00" x2="1339.40" y2="90.40" stroke="#8a8a8a" stroke-width="0.7" />
<line x1="1344.80" y1="73.00" x2="1344.80" y2="90.40" stroke="#8a8a8a" stroke-width="0.7" />
<line x1="1328.60" y1="78.60" x2="1350.00" y2="78.60" stroke="#8a8a8a" stroke-width="0.7" />
<line x1="1328.60" y1="84.40" x2="1350.00" y2="84.40" stroke="#8a8a8a" stroke-width="0.7" />
<circle cx="1338.80" cy="78.40" r="6.4" fill="#fff" stroke="#555" stroke-width="1"/>
<circle cx="1338.80" cy="78.40" r="4.6" fill="#fff" stroke="#8a8a8a" stroke-width="0.6"/>
<rect x="1336.00" y="78.60" width="1.70" height="3.00" fill="#777" />
<rect x="1338.10" y="76.60" width="1.70" height="5.00" fill="#777" />
<rect x="1340.20" y="75.60" width="1.90" height="6.00" fill="#2b88d8" />
<line x1="1343.60" y1="83.20" x2="1350.00" y2="89.80" stroke="#555" stroke-width="1.3" />
<text x="1323.30" y="103.80" font-size="9.6" fill="#2b2b2b" textLength="32.20" lengthAdjust="spacingAndGlyphs" >Analyze</text>
<text x="1329.50" y="116.30" font-size="9.6" fill="#2b2b2b" textLength="19.80" lengthAdjust="spacingAndGlyphs" >Data</text>
<line x1="1363.60" y1="66.50" x2="1363.60" y2="135.00" stroke="#dadada" stroke-width="1" />
<path d="M1381.0 70.6 h8.6 a4 4 0 0 1 3.6 3.6 v6 M1387.0 89.2 h-6 a2 2 0 0 1 -2 -2 v-14.6 a2 2 0 0 1 2 -2" fill="none" stroke="#4a78e8" stroke-width="1" stroke-linecap="round" stroke-linejoin="round"/>
<path d="M1383.4 81.0 c2.2 -2.4 3 -5 2.8 -6.6 c0.4 2.8 2.2 5 5 5.6 c-2.4 -0.4 -5.4 0 -7.8 1 z" fill="none" stroke="#4a78e8" stroke-width="0.7" stroke-linejoin="round"/>
<g transform="translate(1393.2 86.8) rotate(-45)">
<rect x="-6.80" y="-2.10" width="7.40" height="4.20" fill="#fff" rx="2.1" stroke="#4a78e8" stroke-width="1.1" />
<rect x="-0.60" y="-2.10" width="7.40" height="4.20" fill="none" rx="2.1" stroke="#4a78e8" stroke-width="1.1" />
</g>
<text x="1372.50" y="103.80" font-size="9.6" fill="#2b2b2b" textLength="26.80" lengthAdjust="spacingAndGlyphs" >Create</text>
<text x="1374.30" y="116.30" font-size="9.6" fill="#2b2b2b" textLength="23.70" lengthAdjust="spacingAndGlyphs" >a PDF</text>
<path d="M1429.2 70.6 h8.6 a4 4 0 0 1 3.6 3.6 v6 M1435.2 89.2 h-6 a2 2 0 0 1 -2 -2 v-14.6 a2 2 0 0 1 2 -2" fill="none" stroke="#4a78e8" stroke-width="1" stroke-linecap="round" stroke-linejoin="round"/>
<path d="M1431.6 81.0 c2.2 -2.4 3 -5 2.8 -6.6 c0.4 2.8 2.2 5 5 5.6 c-2.4 -0.4 -5.4 0 -7.8 1 z" fill="none" stroke="#4a78e8" stroke-width="0.7" stroke-linejoin="round"/>
<g transform="translate(1441.4 86.8) rotate(-45)">
<rect x="-6.80" y="-2.10" width="7.40" height="4.20" fill="#fff" rx="2.1" stroke="#4a78e8" stroke-width="1.1" />
<rect x="-0.60" y="-2.10" width="7.40" height="4.20" fill="none" rx="2.1" stroke="#4a78e8" stroke-width="1.1" />
</g>
<text x="1407.50" y="103.80" font-size="9.6" fill="#2b2b2b" textLength="53.30" lengthAdjust="spacingAndGlyphs" >Create a PDF</text>
<text x="1405.00" y="116.30" font-size="9.6" fill="#2b2b2b" textLength="58.30" lengthAdjust="spacingAndGlyphs" >and Share link</text>
<text x="1389.30" y="135.60" font-size="8.9" fill="#444444" textLength="55.70" lengthAdjust="spacingAndGlyphs" >Adobe Acrobat</text>
<line x1="1470.80" y1="66.50" x2="1470.80" y2="135.00" stroke="#dadada" stroke-width="1" />
<path d="M1482 73.8 l8 -1.4 l3.6 1 l3.6 -1 l8 1.4 l-1.4 11.8 l-6.6 1.2 l-3.6 -1 l-3.6 1 l-6.6 -1.2 z" fill="#3a8fd6" />
<path d="M1485.6 72.8 l7 -1.4 l1 12 l-6.6 1.2 z" fill="#8fc4ee" />
<path d="M1501.6 72.8 l-7 -1.4 l-1 12 l6.6 1.2 z" fill="#63abe6" />
<circle cx="1493.80" cy="78.20" r="3.7" fill="#f7e46a" stroke="#7d6f2a" stroke-width="0.7"/>
<rect x="1492.40" y="81.60" width="2.80" height="2.60" fill="#555" />
<text x="1480.50" y="103.80" font-size="9.6" fill="#2b2b2b" textLength="25.80" lengthAdjust="spacingAndGlyphs" >Solver</text>
<text x="1482.00" y="135.60" font-size="8.9" fill="#444444" textLength="22.30" lengthAdjust="spacingAndGlyphs" >Solver</text>
<line x1="1515.80" y1="66.50" x2="1515.80" y2="135.00" stroke="#dadada" stroke-width="1" />
<path d="M1576.4 133.4 l3.6 -3.4 l3.6 3.4" fill="none" stroke="#444" stroke-width="1" stroke-linecap="round" stroke-linejoin="round"/>
<rect x="6.50" y="146.80" width="78.50" height="17.50" fill="#fff" rx="3" stroke="#e1e1e1" stroke-width="1" />
<text x="10.50" y="159.80" font-size="10" fill="#262626" textLength="24.10" lengthAdjust="spacingAndGlyphs" >AC25</text>
<path d="M73.70 155.10 L76.70 158.10 L79.70 155.10" fill="none" stroke="#444" stroke-width="1.15" stroke-linecap="round" stroke-linejoin="round"/>
<circle cx="93.30" cy="153.20" r="0.95" fill="#3a3a3a"/>
<circle cx="93.30" cy="156.00" r="0.95" fill="#3a3a3a"/>
<circle cx="93.30" cy="158.80" r="0.95" fill="#3a3a3a"/>
<rect x="101.30" y="146.80" width="66.20" height="17.50" fill="#fff" rx="3" stroke="#e1e1e1" stroke-width="1" />
<path d="M106.8 152 l8.4 8.4 M115.2 152 l-8.4 8.4" fill="none" stroke="#b8b8b8" stroke-width="1" />
<path d="M124.2 156.6 l3.6 3.6 l7.6 -8.6" fill="none" stroke="#b8b8b8" stroke-width="1" />
<text x="143.60" y="159.80" font-size="13.5" fill="#333" font-weight="bold" font-style="italic" style='font-family:"Liberation Serif", serif' >f</text>
<text x="148.40" y="160.00" font-size="10.5" fill="#333" font-weight="bold" font-style="italic" style='font-family:"Liberation Serif", serif' >x</text>
<path d="M159.70 155.20 L162.50 158.00 L165.30 155.20" fill="none" stroke="#8a8a8a" stroke-width="1.15" stroke-linecap="round" stroke-linejoin="round"/>
<rect x="171.30" y="146.80" width="1422.00" height="17.50" fill="#fff" rx="3" stroke="#e1e1e1" stroke-width="1" />
<path d="M1583.30 153.35 L1586.60 156.65 L1589.90 153.35" fill="none" stroke="#444" stroke-width="1.15" stroke-linecap="round" stroke-linejoin="round"/>
<defs><linearGradient id="actab" x1="0" y1="0" x2="0" y2="1"><stop offset="0" stop-color="#fbf9fd"/><stop offset="0.55" stop-color="#e9dff3"/><stop offset="1" stop-color="#c9b3e0"/></linearGradient></defs>
<path d="M23.6 828.6 l-3.2 3.6 l3.2 3.6" fill="none" stroke="#a6a6a6" stroke-width="1" stroke-linecap="round" stroke-linejoin="round"/>
<path d="M45.8 828.6 l3.2 3.6 l-3.2 3.6" fill="none" stroke="#444" stroke-width="1" stroke-linecap="round" stroke-linejoin="round"/>
<rect x="88.00" y="824.20" width="40.00" height="18.20" fill="#ffffff" rx="3" />
<text x="95.30" y="837.10" font-size="11" fill="#262626" textLength="26.00" lengthAdjust="spacingAndGlyphs" >Index</text>
<line x1="131.50" y1="827.00" x2="131.50" y2="840.00" stroke="#d2d2d2" stroke-width="1" />
<rect x="135.00" y="824.20" width="85.00" height="18.20" fill="#ffffcc" rx="3" />
<text x="142.50" y="837.10" font-size="11" fill="#262626" textLength="70.00" lengthAdjust="spacingAndGlyphs" >Global Control</text>
<line x1="223.30" y1="827.00" x2="223.30" y2="840.00" stroke="#d2d2d2" stroke-width="1" />
<rect x="226.80" y="824.20" width="109.50" height="18.20" fill="#7030a0" rx="3" />
<text x="235.00" y="837.10" font-size="11" fill="#fff" textLength="93.30" lengthAdjust="spacingAndGlyphs" >Executive Summary</text>
<line x1="339.60" y1="827.00" x2="339.60" y2="840.00" stroke="#d2d2d2" stroke-width="1" />
<rect x="343.00" y="824.20" width="102.50" height="18.20" fill="#7030a0" rx="3" />
<text x="351.30" y="837.10" font-size="11" fill="#fff" textLength="86.70" lengthAdjust="spacingAndGlyphs" >Investor Summary</text>
<line x1="449.00" y1="827.00" x2="449.00" y2="840.00" stroke="#d2d2d2" stroke-width="1" />
<rect x="452.50" y="824.20" width="86.30" height="18.20" fill="#7030a0" rx="3" />
<text x="460.30" y="837.10" font-size="11" fill="#fff" textLength="71.00" lengthAdjust="spacingAndGlyphs" >Monthly Detail</text>
<line x1="542.30" y1="827.00" x2="542.30" y2="840.00" stroke="#d2d2d2" stroke-width="1" />
<rect x="545.80" y="824.20" width="79.20" height="18.20" fill="#7030a0" rx="3" />
<text x="552.80" y="837.10" font-size="11" fill="#fff" textLength="64.50" lengthAdjust="spacingAndGlyphs" >Annual Detail</text>
<line x1="628.60" y1="827.00" x2="628.60" y2="840.00" stroke="#d2d2d2" stroke-width="1" />
<rect x="632.50" y="820.60" width="45.80" height="20.60" fill="url(#actab)" rx="3" stroke="#e3dced" stroke-width="0.6" />
<text x="638.30" y="835.30" font-size="11" fill="#1a1a1a" font-weight="bold" textLength="34.00" lengthAdjust="spacingAndGlyphs" >Visuals</text>
<rect x="638.30" y="838.40" width="34.00" height="1.40" fill="#1e7145" />
<line x1="682.00" y1="827.00" x2="682.00" y2="840.00" stroke="#d2d2d2" stroke-width="1" />
<rect x="685.50" y="824.20" width="98.30" height="18.20" fill="#ffffcc" rx="3" />
<text x="693.00" y="837.10" font-size="11" fill="#262626" textLength="82.80" lengthAdjust="spacingAndGlyphs" >Studio Expansion</text>
<line x1="787.50" y1="827.00" x2="787.50" y2="840.00" stroke="#d2d2d2" stroke-width="1" />
<text x="796.30" y="837.10" font-size="11" fill="#262626" textLength="15.00" lengthAdjust="spacingAndGlyphs" >M1</text>
<line x1="820.60" y1="827.00" x2="820.60" y2="840.00" stroke="#d2d2d2" stroke-width="1" />
<rect x="824.50" y="824.20" width="76.30" height="18.20" fill="#ffffcc" rx="3" />
<text x="831.50" y="837.10" font-size="11" fill="#262626" textLength="62.00" lengthAdjust="spacingAndGlyphs" >CAPEX detail</text>
<line x1="904.00" y1="827.00" x2="904.00" y2="840.00" stroke="#d2d2d2" stroke-width="1" />
<rect x="907.50" y="824.20" width="55.00" height="18.20" fill="#ffffcc" rx="3" />
<text x="914.50" y="837.10" font-size="11" fill="#262626" textLength="41.00" lengthAdjust="spacingAndGlyphs" >Revenue</text>
<line x1="966.00" y1="827.00" x2="966.00" y2="840.00" stroke="#d2d2d2" stroke-width="1" />
<text x="976.30" y="837.10" font-size="11" fill="#262626" textLength="15.30" lengthAdjust="spacingAndGlyphs" >M2</text>
<line x1="1001.30" y1="827.00" x2="1001.30" y2="840.00" stroke="#d2d2d2" stroke-width="1" />
<rect x="1005.00" y="824.20" width="39.30" height="18.20" fill="#ffffcc" rx="3" />
<text x="1011.30" y="837.10" font-size="11" fill="#262626" textLength="26.50" lengthAdjust="spacingAndGlyphs" >OPEX</text>
<line x1="1047.60" y1="827.00" x2="1047.60" y2="840.00" stroke="#d2d2d2" stroke-width="1" />
<rect x="1051.30" y="824.20" width="24.50" height="18.20" fill="#ffffcc" rx="3" />
<text x="1057.00" y="837.10" font-size="11" fill="#262626" textLength="12.60" lengthAdjust="spacingAndGlyphs" >C1</text>
<line x1="1078.80" y1="827.00" x2="1078.80" y2="840.00" stroke="#d2d2d2" stroke-width="1" />
<rect x="1082.00" y="824.20" width="25.00" height="18.20" fill="#ffffcc" rx="3" />
<text x="1088.30" y="837.10" font-size="11" fill="#262626" textLength="12.70" lengthAdjust="spacingAndGlyphs" >C2</text>
<line x1="1110.60" y1="827.00" x2="1110.60" y2="840.00" stroke="#d2d2d2" stroke-width="1" />
<rect x="1114.30" y="824.20" width="25.70" height="18.20" fill="#ffffcc" rx="3" />
<text x="1120.60" y="837.10" font-size="11" fill="#262626" textLength="12.70" lengthAdjust="spacingAndGlyphs" >C3</text>
<line x1="1143.40" y1="827.00" x2="1143.40" y2="840.00" stroke="#d2d2d2" stroke-width="1" />
<rect x="1146.80" y="824.20" width="83.70" height="18.20" fill="#ffffcc" rx="3" />
<text x="1154.00" y="837.10" font-size="11" fill="#262626" textLength="68.30" lengthAdjust="spacingAndGlyphs" >Other Staffing</text>
<line x1="1233.60" y1="827.00" x2="1233.60" y2="840.00" stroke="#d2d2d2" stroke-width="1" />
<rect x="1237.00" y="824.20" width="22.30" height="18.20" fill="#ffffcc" rx="3" />
<text x="1243.00" y="837.10" font-size="11" fill="#262626" textLength="10.00" lengthAdjust="spacingAndGlyphs" >L1</text>
<line x1="1262.80" y1="827.00" x2="1262.80" y2="840.00" stroke="#d2d2d2" stroke-width="1" />
<rect x="1266.30" y="824.20" width="23.20" height="18.20" fill="#ffffcc" rx="3" />
<text x="1272.60" y="837.10" font-size="11" fill="#262626" textLength="10.70" lengthAdjust="spacingAndGlyphs" >L2</text>
<line x1="1293.20" y1="827.00" x2="1293.20" y2="840.00" stroke="#d2d2d2" stroke-width="1" />
<rect x="1297.00" y="824.20" width="23.50" height="18.20" fill="#ffffcc" rx="3" />
<text x="1303.60" y="837.10" font-size="11" fill="#262626" textLength="10.70" lengthAdjust="spacingAndGlyphs" >L3</text>
<line x1="1324.00" y1="827.00" x2="1324.00" y2="840.00" stroke="#d2d2d2" stroke-width="1" />
<rect x="1327.50" y="824.20" width="23.80" height="18.20" fill="#ffffcc" rx="3" />
<text x="1334.00" y="837.10" font-size="11" fill="#262626" textLength="11.00" lengthAdjust="spacingAndGlyphs" >L4</text>
<line x1="1355.00" y1="827.00" x2="1355.00" y2="840.00" stroke="#d2d2d2" stroke-width="1" />
<path d="M1418 824.2 h-56.2 a3 3 0 0 0 -3 3 v12.2 a3 3 0 0 0 3 3 h56.2 z" fill="#ffffcc" />
<text x="1366.30" y="837.10" font-size="11" fill="#262626" textLength="51.30" lengthAdjust="spacingAndGlyphs" >Startup Co</text>
<circle cx="1427.15" cy="832.60" r="1.1" fill="#2a2a2a"/>
<circle cx="1430.30" cy="832.60" r="1.1" fill="#2a2a2a"/>
<circle cx="1433.45" cy="832.60" r="1.1" fill="#2a2a2a"/>
<path d="M1450.6 832.6 h9 M1455.1 828.1 v9" fill="none" stroke="#333" stroke-width="1.1" />
<circle cx="1480.50" cy="829.64" r="1.0" fill="#2a2a2a"/>
<circle cx="1480.50" cy="833.00" r="1.0" fill="#2a2a2a"/>
<circle cx="1480.50" cy="836.36" r="1.0" fill="#2a2a2a"/>
<rect x="1493.60" y="825.60" width="92.00" height="14.20" fill="#f5f5f5" rx="7.1" />
<path d="M1502.4 829.6 v6.4 l-4.4 -3.2 z" fill="#6e6e6e" />
<rect x="1506.00" y="829.40" width="63.00" height="6.60" fill="#727272" rx="3.3" />
<path d="M1576.6 829.6 v6.4 l4.4 -3.2 z" fill="#6e6e6e" />
<text x="8.80" y="857.10" font-size="8.9" fill="#444" textLength="22.50" lengthAdjust="spacingAndGlyphs" >Ready</text>
<rect x="48.00" y="849.60" width="9.60" height="8.40" fill="none" stroke="#444" stroke-width="0.9" />
<line x1="48.00" y1="851.60" x2="57.60" y2="851.60" stroke="#444" stroke-width="0.9" />
<circle cx="54.40" cy="856.60" r="2.6" fill="#f3f3f3" stroke="#444" stroke-width="0.9"/>
<circle cx="54.40" cy="856.60" r="1.1" fill="#444"/>
<circle cx="76.60" cy="850.40" r="1.2" fill="none" stroke="#444" stroke-width="0.8"/>
<path d="M72.6 852.4 l4 1 l4 -1 M76.6 853.4 v2.6 M76.6 856 l-2.6 4 M76.6 856 l1.4 2" fill="none" stroke="#444" stroke-width="0.85" stroke-linecap="round"/>
<path d="M78.6 857.6 l3 3 M81.6 857.6 l-3 3" fill="none" stroke="#444" stroke-width="0.85" />
<text x="85.80" y="857.10" font-size="8.9" fill="#222" font-weight="bold" textLength="94.70" lengthAdjust="spacingAndGlyphs" >Accessibility: Investigate</text>
<rect x="1367.50" y="846.00" width="31.30" height="16.00" fill="#dadada" />
<rect x="1378.40" y="849.60" width="9.40" height="8.60" fill="none" stroke="#333" stroke-width="0.9" />
<line x1="1381.50" y1="849.60" x2="1381.50" y2="858.20" stroke="#333" stroke-width="0.8" />
<line x1="1384.70" y1="849.60" x2="1384.70" y2="858.20" stroke="#333" stroke-width="0.8" />
<line x1="1378.40" y1="852.50" x2="1387.80" y2="852.50" stroke="#333" stroke-width="0.8" />
<line x1="1378.40" y1="855.40" x2="1387.80" y2="855.40" stroke="#333" stroke-width="0.8" />
<rect x="1409.40" y="849.60" width="9.80" height="8.60" fill="none" rx="0.6" stroke="#444" stroke-width="0.9" />
<rect x="1411.60" y="851.40" width="5.40" height="5.20" fill="none" stroke="#444" stroke-width="0.8" />
<rect x="1440.80" y="849.60" width="9.60" height="8.60" fill="none" stroke="#444" stroke-width="0.9" />
<path d="M1444 849.6 v3.6 h6.4 M1444 853.2 h-3.2" fill="none" stroke="#444" stroke-width="0.8" />
<line x1="1465.60" y1="854.00" x2="1470.40" y2="854.00" stroke="#666" stroke-width="0.9" />
<line x1="1476.00" y1="854.00" x2="1553.80" y2="854.00" stroke="#8a8a8a" stroke-width="0.8" />
<line x1="1514.50" y1="851.60" x2="1514.50" y2="856.40" stroke="#8a8a8a" stroke-width="0.8" />
<rect x="1505.00" y="849.40" width="3.40" height="9.20" fill="#555" rx="0.6" />
<path d="M1557.6 854 h4.8 M1560 851.6 v4.8" fill="none" stroke="#666" stroke-width="0.9" />
<text x="1573.60" y="857.40" font-size="8" fill="#444" textLength="15.40" lengthAdjust="spacingAndGlyphs" >80%</text>
<defs><linearGradient id="cl" x1="0" y1="0" x2="0" y2="1"><stop offset="0" stop-color="#edf3fc"/><stop offset="1" stop-color="#b4c6f0"/></linearGradient></defs>
<path d="M19.6 885.2 a3.8 3.8 0 0 1 -0.4 -7.6 a5.6 5.6 0 0 1 10.6 -1 a4.4 4.4 0 0 1 0.6 8.6 z" fill="url(#cl)" stroke="#9fb6ec" stroke-width="0.6" />
<circle cx="30.30" cy="873.50" r="6.2" fill="#c42b1c"/>
<text x="30.30" y="876.60" font-size="8.6" fill="#fff" text-anchor="middle" font-weight="bold" >7</text>
<text x="40.50" y="878.20" font-size="9.4" fill="#1f1f1f" textLength="18.30" lengthAdjust="spacingAndGlyphs" >22°F</text>
<text x="40.50" y="890.20" font-size="9.4" fill="#5f5f5f" textLength="29.00" lengthAdjust="spacingAndGlyphs" >Cloudy</text>
<defs><linearGradient id="wl" x1="0" y1="0" x2="1" y2="1"><stop offset="0" stop-color="#35c1f1"/><stop offset="1" stop-color="#0a78d4"/></linearGradient></defs>
<rect x="565.70" y="872.80" width="8.70" height="8.70" fill="url(#wl)" rx="0.5" />
<rect x="565.70" y="882.10" width="8.70" height="8.70" fill="url(#wl)" rx="0.5" />
<rect x="575.00" y="872.80" width="8.70" height="8.70" fill="url(#wl)" rx="0.5" />
<rect x="575.00" y="882.10" width="8.70" height="8.70" fill="url(#wl)" rx="0.5" />
<rect x="594.80" y="869.30" width="170.70" height="24.00" fill="#edf3f9" rx="12" stroke="#dde6ee" stroke-width="0.8" />
<circle cx="608.20" cy="880.20" r="3.9" fill="none" stroke="#222" stroke-width="1.2"/>
<line x1="611.00" y1="883.20" x2="614.00" y2="886.40" stroke="#222" stroke-width="1.4" stroke-linecap="round"/>
<text x="623.30" y="885.50" font-size="10.6" fill="#616161" textLength="32.00" lengthAdjust="spacingAndGlyphs" >Search</text>
<rect x="730.60" y="873.60" width="4.40" height="8.00" fill="#8f86c6" rx="2.2" stroke="#5d568f" stroke-width="0.5" transform="rotate(14 732.8 877.6)"/>
<line x1="732.00" y1="882.00" x2="732.40" y2="891.00" stroke="#6d66a0" stroke-width="1" />
<path d="M742 880.4 c1.4 -2.6 4 -5 7 -6.4 c1.6 1.4 3.4 2.4 5.6 3 c1.6 0.4 3 1 3.6 2 l-13 5 z" fill="#1f63bd" />
<path d="M738 885.4 c1 -3 3.4 -5.6 6.6 -8 c1.6 -1.4 3.6 -2.8 5.4 -3 c1.4 1.6 3 3.2 5.2 4 c1.8 0.6 4.4 1.4 5.4 3 c0.6 1.6 -0.4 3 -2 3.6 c-4.6 1.8 -9.2 3.6 -14 4.8 c-2.8 0.6 -6 0.2 -6.6 -4.4 z" fill="#2b7bd8" />
<path d="M740 887.6 c4 1.6 12 -1.6 20.4 -5.4 l0.4 1.6 c-4.6 2.4 -13 6 -18.6 6.2 z" fill="#1a4f9c" />
<path d="M744 878.4 c1.8 -1.6 4.2 -3.2 6 -3.8 l2 2.2 c-2 0.6 -4.4 2.2 -6 3.6 z" fill="#5aa6ee" />
<rect x="782.60" y="872.80" width="11.40" height="11.40" fill="#f4f4f4" rx="1.6" stroke="#d8dee4" stroke-width="0.5" />
<rect x="775.60" y="878.00" width="13.20" height="11.80" fill="#2b2b2b" rx="1.4" />
<rect x="779.60" y="878.00" width="9.40" height="8.00" fill="#bdbdbd" opacity="0.9"/>
<path d="M809.8 875 a1.4 1.4 0 0 1 1.4 -1.4 h5.2 l2.2 2 h9 a1.4 1.4 0 0 1 1.4 1.4 v11.4 a1.4 1.4 0 0 1 -1.4 1.4 h-16.4 a1.4 1.4 0 0 1 -1.4 -1.4 z" fill="#f4b400" />
<rect x="809.80" y="877.00" width="19.20" height="12.80" fill="#fdd35a" rx="1.4" />
<rect x="813.00" y="885.00" width="12.80" height="4.80" fill="#1583d8" rx="1.2" />
<rect x="815.20" y="887.40" width="8.40" height="2.40" fill="#0b5cad" />
<path d="M853.7 872 a9 9 0 1 0 0.01 0 z M853.7 874.6 a3.9 6.4 0 1 1 -0.01 0 z" fill="#e3152b" fill-rule="evenodd"/>
<path d="M853.7 872 a9 9 0 0 1 6.4 15.3 a6.6 7.6 0 0 0 -6.4 -12.7 z" fill="#b50f24" opacity="0.55"/>
<rect x="883.40" y="873.00" width="13.80" height="16.80" fill="#21a366" rx="1.4" />
<rect x="890.20" y="873.00" width="7.00" height="5.60" fill="#33c481" />
<rect x="883.40" y="878.60" width="6.80" height="5.60" fill="#107c41" />
<rect x="883.40" y="884.20" width="13.80" height="5.60" fill="#185c37" rx="1.2" />
<rect x="878.80" y="876.40" width="10.40" height="10.40" fill="#107c41" rx="1.2" />
<text x="884.00" y="884.80" font-size="8.2" fill="#fff" text-anchor="middle" font-weight="bold" >X</text>
<circle cx="921.80" cy="881.30" r="8.8" fill="#e8ecf0"/>
<path d="M921.8 881.3 L914.2 876.9 A8.8 8.8 0 0 1 929.4 876.9 Z" fill="#e33b2e" />
<path d="M921.8 881.3 L929.4 876.9 A8.8 8.8 0 0 1 921.8 890.1 Z" fill="#fbc116" />
<path d="M921.8 881.3 L921.8 890.1 A8.8 8.8 0 0 1 914.2 876.9 Z" fill="#2da94f" />
<circle cx="921.80" cy="881.30" r="4.2" fill="#fff"/>
<circle cx="921.80" cy="881.30" r="3.3" fill="#4285f4"/>
<circle cx="929.30" cy="874.00" r="5.8" fill="#b9b9b9" stroke="#9a9a9a" stroke-width="0.6"/>
<line x1="925.60" y1="873.20" x2="933.00" y2="873.20" stroke="#8e8e8e" stroke-width="1" />
<rect x="948.20" y="872.80" width="12.40" height="12.40" fill="#f2f2f2" rx="1.6" />
<rect x="950.40" y="875.00" width="8.00" height="8.00" fill="none" stroke="#d8242f" stroke-width="1.3" stroke-dasharray="1.5 1.5"/>
<path d="M958.4 877 v9.6 l-3.4 4 M952 884.6 h9.4 l3.6 -2" fill="none" stroke="#8a8a8a" stroke-width="1" />
<circle cx="956.00" cy="889.40" r="1.5" fill="none" stroke="#1b8fe4" stroke-width="1"/>
<circle cx="964.60" cy="881.60" r="1.5" fill="none" stroke="#1b8fe4" stroke-width="1"/>
<circle cx="990.80" cy="881.00" r="9.2" fill="#0b0b0b"/>
<text x="990.90" y="884.20" font-size="10" fill="#fff" text-anchor="middle" font-weight="bold" textLength="10.40" lengthAdjust="spacingAndGlyphs" >up</text>
<rect x="1019.00" y="873.60" width="14.00" height="16.60" fill="#35b6e6" rx="1.4" />
<rect x="1019.00" y="888.00" width="14.00" height="2.60" fill="#8b5a2b" />
<rect x="1021.20" y="872.00" width="1.40" height="2.60" fill="#1d7fb0" />
<rect x="1024.00" y="872.00" width="1.40" height="2.60" fill="#1d7fb0" />
<rect x="1026.80" y="872.00" width="1.40" height="2.60" fill="#1d7fb0" />
<rect x="1029.60" y="872.00" width="1.40" height="2.60" fill="#1d7fb0" />
<line x1="1021.40" y1="878.00" x2="1030.80" y2="878.00" stroke="#13699a" stroke-width="1" />
<line x1="1021.40" y1="880.60" x2="1030.80" y2="880.60" stroke="#13699a" stroke-width="1" />
<line x1="1021.40" y1="883.20" x2="1030.80" y2="883.20" stroke="#13699a" stroke-width="1" />
<line x1="1021.40" y1="885.80" x2="1030.80" y2="885.80" stroke="#13699a" stroke-width="1" />
<rect x="851.30" y="894.20" width="4.80" height="1.60" fill="#8e9399" rx="0.8" />
<rect x="885.60" y="894.20" width="4.80" height="1.60" fill="#8e9399" rx="0.8" />
<rect x="919.40" y="894.20" width="4.80" height="1.60" fill="#8e9399" rx="0.8" />
<rect x="988.40" y="894.20" width="4.80" height="1.60" fill="#8e9399" rx="0.8" />
<rect x="1023.60" y="894.20" width="4.80" height="1.60" fill="#8e9399" rx="0.8" />
<path d="M1479.6 883 l4.2 -4.2 l4.2 4.2" fill="none" stroke="#222" stroke-width="1.2" stroke-linecap="round" stroke-linejoin="round"/>
<rect x="1502.40" y="875.60" width="10.00" height="8.20" fill="none" rx="1" stroke="#333" stroke-width="1" />
<path d="M1505 887 h5.6 M1506.4 884 v3 M1509 884 v3" fill="none" stroke="#333" stroke-width="1" />
<rect x="1512.20" y="875.20" width="2.60" height="4.00" fill="#cfe3f1" rx="1" stroke="#333" stroke-width="0.9" />
<line x1="1513.50" y1="879.20" x2="1513.50" y2="886.60" stroke="#333" stroke-width="0.9" />
<path d="M1521.4 879.2 h2.2 l3 -2.6 v8.8 l-3 -2.6 h-2.2 z" fill="none" stroke="#333" stroke-width="0.9" stroke-linejoin="round"/>
<path d="M1528.4 878.8 a3 3 0 0 1 0 4.4 M1530.2 877 a5.4 5.4 0 0 1 0 8" fill="none" stroke="#333" stroke-width="0.9" />
<path d="M1532 875.4 a7.8 7.8 0 0 1 0 11.2" fill="none" stroke="#9ab0c0" stroke-width="0.7" />
<text x="1551.50" y="878.00" font-size="9" fill="#1f1f1f" textLength="33.30" lengthAdjust="spacingAndGlyphs" >3:10 PM</text>
<text x="1547.00" y="890.20" font-size="9" fill="#1f1f1f" textLength="37.80" lengthAdjust="spacingAndGlyphs" >1/8/2025</text>
<rect x="16.00" y="183.00" width="1022.50" height="638.00" fill="#f2f2f2" />
<rect x="1038.50" y="183.00" width="546.00" height="638.00" fill="#ffffff" />
<text x="36.20" y="179.80" font-size="8.7" fill="#3b3b3b" text-anchor="middle" >A</text>
<line x1="55.60" y1="172.00" x2="55.60" y2="182.00" stroke="#dedede" stroke-width="1" />
<text x="76.20" y="179.80" font-size="8.7" fill="#3b3b3b" text-anchor="middle" >B</text>
<line x1="95.60" y1="172.00" x2="95.60" y2="182.00" stroke="#dedede" stroke-width="1" />
<text x="116.20" y="179.80" font-size="8.7" fill="#3b3b3b" text-anchor="middle" >C</text>
<line x1="135.60" y1="172.00" x2="135.60" y2="182.00" stroke="#dedede" stroke-width="1" />
<text x="156.20" y="179.80" font-size="8.7" fill="#3b3b3b" text-anchor="middle" >D</text>
<line x1="175.60" y1="172.00" x2="175.60" y2="182.00" stroke="#dedede" stroke-width="1" />
<text x="196.20" y="179.80" font-size="8.7" fill="#3b3b3b" text-anchor="middle" >E</text>
<line x1="215.60" y1="172.00" x2="215.60" y2="182.00" stroke="#dedede" stroke-width="1" />
<text x="236.20" y="179.80" font-size="8.7" fill="#3b3b3b" text-anchor="middle" >F</text>
<line x1="255.60" y1="172.00" x2="255.60" y2="182.00" stroke="#dedede" stroke-width="1" />
<text x="276.20" y="179.80" font-size="8.7" fill="#3b3b3b" text-anchor="middle" >G</text>
<line x1="295.60" y1="172.00" x2="295.60" y2="182.00" stroke="#dedede" stroke-width="1" />
<text x="316.20" y="179.80" font-size="8.7" fill="#3b3b3b" text-anchor="middle" >H</text>
<line x1="335.60" y1="172.00" x2="335.60" y2="182.00" stroke="#dedede" stroke-width="1" />
<text x="356.20" y="179.80" font-size="8.7" fill="#3b3b3b" text-anchor="middle" >I</text>
<line x1="375.60" y1="172.00" x2="375.60" y2="182.00" stroke="#dedede" stroke-width="1" />
<text x="396.20" y="179.80" font-size="8.7" fill="#3b3b3b" text-anchor="middle" >J</text>
<line x1="415.60" y1="172.00" x2="415.60" y2="182.00" stroke="#dedede" stroke-width="1" />
<text x="436.20" y="179.80" font-size="8.7" fill="#3b3b3b" text-anchor="middle" >K</text>
<line x1="455.60" y1="172.00" x2="455.60" y2="182.00" stroke="#dedede" stroke-width="1" />
<text x="476.20" y="179.80" font-size="8.7" fill="#3b3b3b" text-anchor="middle" >L</text>
<line x1="495.60" y1="172.00" x2="495.60" y2="182.00" stroke="#dedede" stroke-width="1" />
<text x="516.20" y="179.80" font-size="8.7" fill="#3b3b3b" text-anchor="middle" >M</text>
<line x1="535.60" y1="172.00" x2="535.60" y2="182.00" stroke="#dedede" stroke-width="1" />
<text x="556.20" y="179.80" font-size="8.7" fill="#3b3b3b" text-anchor="middle" >N</text>
<line x1="575.60" y1="172.00" x2="575.60" y2="182.00" stroke="#dedede" stroke-width="1" />
<text x="596.20" y="179.80" font-size="8.7" fill="#3b3b3b" text-anchor="middle" >O</text>
<line x1="615.60" y1="172.00" x2="615.60" y2="182.00" stroke="#dedede" stroke-width="1" />
<text x="636.20" y="179.80" font-size="8.7" fill="#3b3b3b" text-anchor="middle" >P</text>
<line x1="655.60" y1="172.00" x2="655.60" y2="182.00" stroke="#dedede" stroke-width="1" />
<text x="676.20" y="179.80" font-size="8.7" fill="#3b3b3b" text-anchor="middle" >Q</text>
<line x1="695.60" y1="172.00" x2="695.60" y2="182.00" stroke="#dedede" stroke-width="1" />
<text x="716.20" y="179.80" font-size="8.7" fill="#3b3b3b" text-anchor="middle" >R</text>
<line x1="735.60" y1="172.00" x2="735.60" y2="182.00" stroke="#dedede" stroke-width="1" />
<text x="756.20" y="179.80" font-size="8.7" fill="#3b3b3b" text-anchor="middle" >S</text>
<line x1="775.60" y1="172.00" x2="775.60" y2="182.00" stroke="#dedede" stroke-width="1" />
<text x="796.20" y="179.80" font-size="8.7" fill="#3b3b3b" text-anchor="middle" >T</text>
<line x1="815.60" y1="172.00" x2="815.60" y2="182.00" stroke="#dedede" stroke-width="1" />
<text x="836.20" y="179.80" font-size="8.7" fill="#3b3b3b" text-anchor="middle" >U</text>
<line x1="855.60" y1="172.00" x2="855.60" y2="182.00" stroke="#dedede" stroke-width="1" />
<text x="876.20" y="179.80" font-size="8.7" fill="#3b3b3b" text-anchor="middle" >V</text>
<line x1="895.60" y1="172.00" x2="895.60" y2="182.00" stroke="#dedede" stroke-width="1" />
<text x="916.20" y="179.80" font-size="8.7" fill="#3b3b3b" text-anchor="middle" >W</text>
<line x1="935.60" y1="172.00" x2="935.60" y2="182.00" stroke="#dedede" stroke-width="1" />
<text x="956.20" y="179.80" font-size="8.7" fill="#3b3b3b" text-anchor="middle" >X</text>
<line x1="975.60" y1="172.00" x2="975.60" y2="182.00" stroke="#dedede" stroke-width="1" />
<text x="996.20" y="179.80" font-size="8.7" fill="#3b3b3b" text-anchor="middle" >Y</text>
<line x1="1015.60" y1="172.00" x2="1015.60" y2="182.00" stroke="#dedede" stroke-width="1" />
<text x="1036.20" y="179.80" font-size="8.7" fill="#3b3b3b" text-anchor="middle" >Z</text>
<line x1="1055.60" y1="172.00" x2="1055.60" y2="182.00" stroke="#dedede" stroke-width="1" />
<text x="1076.20" y="179.80" font-size="8.7" fill="#3b3b3b" text-anchor="middle" >AA</text>
<line x1="1095.60" y1="172.00" x2="1095.60" y2="182.00" stroke="#dedede" stroke-width="1" />
<text x="1116.20" y="179.80" font-size="8.7" fill="#3b3b3b" text-anchor="middle" >AB</text>
<line x1="1135.60" y1="172.00" x2="1135.60" y2="182.00" stroke="#dedede" stroke-width="1" />
<text x="1156.20" y="179.80" font-size="8.7" fill="#3b3b3b" text-anchor="middle" >AC</text>
<line x1="1175.60" y1="172.00" x2="1175.60" y2="182.00" stroke="#dedede" stroke-width="1" />
<text x="1196.20" y="179.80" font-size="8.7" fill="#3b3b3b" text-anchor="middle" >AD</text>
<line x1="1215.60" y1="172.00" x2="1215.60" y2="182.00" stroke="#dedede" stroke-width="1" />
<text x="1236.20" y="179.80" font-size="8.7" fill="#3b3b3b" text-anchor="middle" >AE</text>
<line x1="1255.60" y1="172.00" x2="1255.60" y2="182.00" stroke="#dedede" stroke-width="1" />
<text x="1276.20" y="179.80" font-size="8.7" fill="#3b3b3b" text-anchor="middle" >AF</text>
<line x1="1295.60" y1="172.00" x2="1295.60" y2="182.00" stroke="#dedede" stroke-width="1" />
<text x="1316.20" y="179.80" font-size="8.7" fill="#3b3b3b" text-anchor="middle" >AG</text>
<line x1="1335.60" y1="172.00" x2="1335.60" y2="182.00" stroke="#dedede" stroke-width="1" />
<text x="1356.20" y="179.80" font-size="8.7" fill="#3b3b3b" text-anchor="middle" >AH</text>
<line x1="1375.60" y1="172.00" x2="1375.60" y2="182.00" stroke="#dedede" stroke-width="1" />
<text x="1396.20" y="179.80" font-size="8.7" fill="#3b3b3b" text-anchor="middle" >AI</text>
<line x1="1415.60" y1="172.00" x2="1415.60" y2="182.00" stroke="#dedede" stroke-width="1" />
<text x="1436.20" y="179.80" font-size="8.7" fill="#3b3b3b" text-anchor="middle" >AJ</text>
<line x1="1455.60" y1="172.00" x2="1455.60" y2="182.00" stroke="#dedede" stroke-width="1" />
<text x="1476.20" y="179.80" font-size="8.7" fill="#3b3b3b" text-anchor="middle" >AK</text>
<line x1="1495.60" y1="172.00" x2="1495.60" y2="182.00" stroke="#dedede" stroke-width="1" />
<text x="1516.20" y="179.80" font-size="8.7" fill="#3b3b3b" text-anchor="middle" >AL</text>
<line x1="1535.60" y1="172.00" x2="1535.60" y2="182.00" stroke="#dedede" stroke-width="1" />
<text x="1556.20" y="179.80" font-size="8.7" fill="#3b3b3b" text-anchor="middle" >AM</text>
<line x1="1575.60" y1="172.00" x2="1575.60" y2="182.00" stroke="#dedede" stroke-width="1" />
<path d="M6.2 180 L13.8 172.6 L13.8 180 Z" fill="#d2d2d2" />
<line x1="0.00" y1="182.50" x2="1585.00" y2="182.50" stroke="#c6c6c6" stroke-width="1" />
<line x1="16.50" y1="171.00" x2="16.50" y2="821.00" stroke="#d2d2d2" stroke-width="1" />
<line x1="0.00" y1="194.49" x2="16.00" y2="194.49" stroke="#e4e4e4" stroke-width="0.8" />
<line x1="0.00" y1="206.37" x2="16.00" y2="206.37" stroke="#e4e4e4" stroke-width="0.8" />
<line x1="0.00" y1="218.26" x2="16.00" y2="218.26" stroke="#e4e4e4" stroke-width="0.8" />
<line x1="0.00" y1="230.15" x2="16.00" y2="230.15" stroke="#e4e4e4" stroke-width="0.8" />
<line x1="0.00" y1="242.03" x2="16.00" y2="242.03" stroke="#e4e4e4" stroke-width="0.8" />
<line x1="0.00" y1="253.92" x2="16.00" y2="253.92" stroke="#e4e4e4" stroke-width="0.8" />
<line x1="0.00" y1="265.81" x2="16.00" y2="265.81" stroke="#e4e4e4" stroke-width="0.8" />
<line x1="0.00" y1="277.70" x2="16.00" y2="277.70" stroke="#e4e4e4" stroke-width="0.8" />
<line x1="0.00" y1="289.58" x2="16.00" y2="289.58" stroke="#e4e4e4" stroke-width="0.8" />
<line x1="0.00" y1="301.47" x2="16.00" y2="301.47" stroke="#e4e4e4" stroke-width="0.8" />
<line x1="0.00" y1="313.36" x2="16.00" y2="313.36" stroke="#e4e4e4" stroke-width="0.8" />
<line x1="0.00" y1="325.24" x2="16.00" y2="325.24" stroke="#e4e4e4" stroke-width="0.8" />
<line x1="0.00" y1="337.13" x2="16.00" y2="337.13" stroke="#e4e4e4" stroke-width="0.8" />
<line x1="0.00" y1="349.02" x2="16.00" y2="349.02" stroke="#e4e4e4" stroke-width="0.8" />
<line x1="0.00" y1="360.90" x2="16.00" y2="360.90" stroke="#e4e4e4" stroke-width="0.8" />
<line x1="0.00" y1="372.79" x2="16.00" y2="372.79" stroke="#e4e4e4" stroke-width="0.8" />
<line x1="0.00" y1="384.68" x2="16.00" y2="384.68" stroke="#e4e4e4" stroke-width="0.8" />
<line x1="0.00" y1="396.57" x2="16.00" y2="396.57" stroke="#e4e4e4" stroke-width="0.8" />
<line x1="0.00" y1="408.45" x2="16.00" y2="408.45" stroke="#e4e4e4" stroke-width="0.8" />
<line x1="0.00" y1="420.34" x2="16.00" y2="420.34" stroke="#e4e4e4" stroke-width="0.8" />
<line x1="0.00" y1="432.23" x2="16.00" y2="432.23" stroke="#e4e4e4" stroke-width="0.8" />
<line x1="0.00" y1="444.11" x2="16.00" y2="444.11" stroke="#e4e4e4" stroke-width="0.8" />
<line x1="0.00" y1="456.00" x2="16.00" y2="456.00" stroke="#e4e4e4" stroke-width="0.8" />
<line x1="0.00" y1="467.89" x2="16.00" y2="467.89" stroke="#e4e4e4" stroke-width="0.8" />
<line x1="0.00" y1="479.77" x2="16.00" y2="479.77" stroke="#e4e4e4" stroke-width="0.8" />
<line x1="0.00" y1="491.66" x2="16.00" y2="491.66" stroke="#e4e4e4" stroke-width="0.8" />
<line x1="0.00" y1="503.55" x2="16.00" y2="503.55" stroke="#e4e4e4" stroke-width="0.8" />
<line x1="0.00" y1="515.44" x2="16.00" y2="515.44" stroke="#e4e4e4" stroke-width="0.8" />
<line x1="0.00" y1="527.32" x2="16.00" y2="527.32" stroke="#e4e4e4" stroke-width="0.8" />
<line x1="0.00" y1="539.21" x2="16.00" y2="539.21" stroke="#e4e4e4" stroke-width="0.8" />
<line x1="0.00" y1="551.10" x2="16.00" y2="551.10" stroke="#e4e4e4" stroke-width="0.8" />
<line x1="0.00" y1="562.98" x2="16.00" y2="562.98" stroke="#e4e4e4" stroke-width="0.8" />
<line x1="0.00" y1="574.87" x2="16.00" y2="574.87" stroke="#e4e4e4" stroke-width="0.8" />
<line x1="0.00" y1="586.76" x2="16.00" y2="586.76" stroke="#e4e4e4" stroke-width="0.8" />
<line x1="0.00" y1="598.64" x2="16.00" y2="598.64" stroke="#e4e4e4" stroke-width="0.8" />
<line x1="0.00" y1="610.53" x2="16.00" y2="610.53" stroke="#e4e4e4" stroke-width="0.8" />
<line x1="0.00" y1="622.42" x2="16.00" y2="622.42" stroke="#e4e4e4" stroke-width="0.8" />
<line x1="0.00" y1="634.31" x2="16.00" y2="634.31" stroke="#e4e4e4" stroke-width="0.8" />
<line x1="0.00" y1="646.19" x2="16.00" y2="646.19" stroke="#e4e4e4" stroke-width="0.8" />
<line x1="0.00" y1="658.08" x2="16.00" y2="658.08" stroke="#e4e4e4" stroke-width="0.8" />
<line x1="0.00" y1="669.97" x2="16.00" y2="669.97" stroke="#e4e4e4" stroke-width="0.8" />
<line x1="0.00" y1="681.85" x2="16.00" y2="681.85" stroke="#e4e4e4" stroke-width="0.8" />
<line x1="0.00" y1="693.74" x2="16.00" y2="693.74" stroke="#e4e4e4" stroke-width="0.8" />
<line x1="0.00" y1="705.63" x2="16.00" y2="705.63" stroke="#e4e4e4" stroke-width="0.8" />
<line x1="0.00" y1="717.51" x2="16.00" y2="717.51" stroke="#e4e4e4" stroke-width="0.8" />
<line x1="0.00" y1="729.40" x2="16.00" y2="729.40" stroke="#e4e4e4" stroke-width="0.8" />
<line x1="0.00" y1="741.29" x2="16.00" y2="741.29" stroke="#e4e4e4" stroke-width="0.8" />
<line x1="0.00" y1="753.18" x2="16.00" y2="753.18" stroke="#e4e4e4" stroke-width="0.8" />
<line x1="0.00" y1="765.06" x2="16.00" y2="765.06" stroke="#e4e4e4" stroke-width="0.8" />
<line x1="0.00" y1="776.95" x2="16.00" y2="776.95" stroke="#e4e4e4" stroke-width="0.8" />
<line x1="0.00" y1="788.84" x2="16.00" y2="788.84" stroke="#e4e4e4" stroke-width="0.8" />
<line x1="0.00" y1="800.72" x2="16.00" y2="800.72" stroke="#e4e4e4" stroke-width="0.8" />
<line x1="0.00" y1="812.61" x2="16.00" y2="812.61" stroke="#e4e4e4" stroke-width="0.8" />
<text x="7.80" y="191.00" font-size="9.2" fill="#3b3b3b" text-anchor="middle" textLength="4.60" lengthAdjust="spacingAndGlyphs" >1</text>
<text x="7.80" y="202.89" font-size="9.2" fill="#3b3b3b" text-anchor="middle" textLength="4.60" lengthAdjust="spacingAndGlyphs" >2</text>
<text x="7.80" y="214.77" font-size="9.2" fill="#3b3b3b" text-anchor="middle" textLength="4.60" lengthAdjust="spacingAndGlyphs" >3</text>
<text x="7.80" y="226.66" font-size="9.2" fill="#3b3b3b" text-anchor="middle" textLength="4.60" lengthAdjust="spacingAndGlyphs" >4</text>
<text x="7.80" y="238.55" font-size="9.2" fill="#3b3b3b" text-anchor="middle" textLength="4.60" lengthAdjust="spacingAndGlyphs" >5</text>
<text x="7.80" y="250.44" font-size="9.2" fill="#3b3b3b" text-anchor="middle" textLength="4.60" lengthAdjust="spacingAndGlyphs" >6</text>
<text x="7.80" y="262.32" font-size="9.2" fill="#3b3b3b" text-anchor="middle" textLength="4.60" lengthAdjust="spacingAndGlyphs" >7</text>
<text x="7.80" y="274.21" font-size="9.2" fill="#3b3b3b" text-anchor="middle" textLength="4.60" lengthAdjust="spacingAndGlyphs" >8</text>
<text x="7.80" y="286.10" font-size="9.2" fill="#3b3b3b" text-anchor="middle" textLength="4.60" lengthAdjust="spacingAndGlyphs" >9</text>
<text x="7.80" y="297.98" font-size="9.2" fill="#3b3b3b" text-anchor="middle" textLength="9.20" lengthAdjust="spacingAndGlyphs" >10</text>
<text x="7.80" y="309.87" font-size="9.2" fill="#3b3b3b" text-anchor="middle" textLength="9.20" lengthAdjust="spacingAndGlyphs" >11</text>
<text x="7.80" y="321.76" font-size="9.2" fill="#3b3b3b" text-anchor="middle" textLength="9.20" lengthAdjust="spacingAndGlyphs" >12</text>
<text x="7.80" y="333.64" font-size="9.2" fill="#3b3b3b" text-anchor="middle" textLength="9.20" lengthAdjust="spacingAndGlyphs" >13</text>
<text x="7.80" y="345.53" font-size="9.2" fill="#3b3b3b" text-anchor="middle" textLength="9.20" lengthAdjust="spacingAndGlyphs" >14</text>
<text x="7.80" y="357.42" font-size="9.2" fill="#3b3b3b" text-anchor="middle" textLength="9.20" lengthAdjust="spacingAndGlyphs" >15</text>
<text x="7.80" y="369.31" font-size="9.2" fill="#3b3b3b" text-anchor="middle" textLength="9.20" lengthAdjust="spacingAndGlyphs" >16</text>
<text x="7.80" y="381.19" font-size="9.2" fill="#3b3b3b" text-anchor="middle" textLength="9.20" lengthAdjust="spacingAndGlyphs" >17</text>
<text x="7.80" y="393.08" font-size="9.2" fill="#3b3b3b" text-anchor="middle" textLength="9.20" lengthAdjust="spacingAndGlyphs" >18</text>
<text x="7.80" y="404.97" font-size="9.2" fill="#3b3b3b" text-anchor="middle" textLength="9.20" lengthAdjust="spacingAndGlyphs" >19</text>
<text x="7.80" y="416.85" font-size="9.2" fill="#3b3b3b" text-anchor="middle" textLength="9.20" lengthAdjust="spacingAndGlyphs" >20</text>
<text x="7.80" y="428.74" font-size="9.2" fill="#3b3b3b" text-anchor="middle" textLength="9.20" lengthAdjust="spacingAndGlyphs" >21</text>
<text x="7.80" y="440.63" font-size="9.2" fill="#3b3b3b" text-anchor="middle" textLength="9.20" lengthAdjust="spacingAndGlyphs" >22</text>
<text x="7.80" y="452.51" font-size="9.2" fill="#3b3b3b" text-anchor="middle" textLength="9.20" lengthAdjust="spacingAndGlyphs" >23</text>
<text x="7.80" y="464.40" font-size="9.2" fill="#3b3b3b" text-anchor="middle" textLength="9.20" lengthAdjust="spacingAndGlyphs" >24</text>
<text x="7.80" y="476.29" font-size="9.2" fill="#3b3b3b" text-anchor="middle" textLength="9.20" lengthAdjust="spacingAndGlyphs" >25</text>
<text x="7.80" y="488.18" font-size="9.2" fill="#3b3b3b" text-anchor="middle" textLength="9.20" lengthAdjust="spacingAndGlyphs" >26</text>
<text x="7.80" y="500.06" font-size="9.2" fill="#3b3b3b" text-anchor="middle" textLength="9.20" lengthAdjust="spacingAndGlyphs" >27</text>
<text x="7.80" y="511.95" font-size="9.2" fill="#3b3b3b" text-anchor="middle" textLength="9.20" lengthAdjust="spacingAndGlyphs" >28</text>
<text x="7.80" y="523.84" font-size="9.2" fill="#3b3b3b" text-anchor="middle" textLength="9.20" lengthAdjust="spacingAndGlyphs" >29</text>
<text x="7.80" y="535.72" font-size="9.2" fill="#3b3b3b" text-anchor="middle" textLength="9.20" lengthAdjust="spacingAndGlyphs" >30</text>
<text x="7.80" y="547.61" font-size="9.2" fill="#3b3b3b" text-anchor="middle" textLength="9.20" lengthAdjust="spacingAndGlyphs" >31</text>
<text x="7.80" y="559.50" font-size="9.2" fill="#3b3b3b" text-anchor="middle" textLength="9.20" lengthAdjust="spacingAndGlyphs" >32</text>
<text x="7.80" y="571.38" font-size="9.2" fill="#3b3b3b" text-anchor="middle" textLength="9.20" lengthAdjust="spacingAndGlyphs" >33</text>
<text x="7.80" y="583.27" font-size="9.2" fill="#3b3b3b" text-anchor="middle" textLength="9.20" lengthAdjust="spacingAndGlyphs" >34</text>
<text x="7.80" y="595.16" font-size="9.2" fill="#3b3b3b" text-anchor="middle" textLength="9.20" lengthAdjust="spacingAndGlyphs" >35</text>
<text x="7.80" y="607.05" font-size="9.2" fill="#3b3b3b" text-anchor="middle" textLength="9.20" lengthAdjust="spacingAndGlyphs" >36</text>
<text x="7.80" y="618.93" font-size="9.2" fill="#3b3b3b" text-anchor="middle" textLength="9.20" lengthAdjust="spacingAndGlyphs" >37</text>
<text x="7.80" y="630.82" font-size="9.2" fill="#3b3b3b" text-anchor="middle" textLength="9.20" lengthAdjust="spacingAndGlyphs" >38</text>
<text x="7.80" y="642.71" font-size="9.2" fill="#3b3b3b" text-anchor="middle" textLength="9.20" lengthAdjust="spacingAndGlyphs" >39</text>
<text x="7.80" y="654.59" font-size="9.2" fill="#3b3b3b" text-anchor="middle" textLength="9.20" lengthAdjust="spacingAndGlyphs" >40</text>
<text x="7.80" y="666.48" font-size="9.2" fill="#3b3b3b" text-anchor="middle" textLength="9.20" lengthAdjust="spacingAndGlyphs" >41</text>
<text x="7.80" y="678.37" font-size="9.2" fill="#3b3b3b" text-anchor="middle" textLength="9.20" lengthAdjust="spacingAndGlyphs" >42</text>
<text x="7.80" y="690.25" font-size="9.2" fill="#3b3b3b" text-anchor="middle" textLength="9.20" lengthAdjust="spacingAndGlyphs" >43</text>
<text x="7.80" y="702.14" font-size="9.2" fill="#3b3b3b" text-anchor="middle" textLength="9.20" lengthAdjust="spacingAndGlyphs" >44</text>
<text x="7.80" y="714.03" font-size="9.2" fill="#3b3b3b" text-anchor="middle" textLength="9.20" lengthAdjust="spacingAndGlyphs" >45</text>
<text x="7.80" y="725.91" font-size="9.2" fill="#3b3b3b" text-anchor="middle" textLength="9.20" lengthAdjust="spacingAndGlyphs" >46</text>
<text x="7.80" y="737.80" font-size="9.2" fill="#3b3b3b" text-anchor="middle" textLength="9.20" lengthAdjust="spacingAndGlyphs" >47</text>
<text x="7.80" y="749.69" font-size="9.2" fill="#3b3b3b" text-anchor="middle" textLength="9.20" lengthAdjust="spacingAndGlyphs" >48</text>
<text x="7.80" y="761.58" font-size="9.2" fill="#3b3b3b" text-anchor="middle" textLength="9.20" lengthAdjust="spacingAndGlyphs" >49</text>
<text x="7.80" y="773.46" font-size="9.2" fill="#3b3b3b" text-anchor="middle" textLength="9.20" lengthAdjust="spacingAndGlyphs" >50</text>
<text x="7.80" y="785.35" font-size="9.2" fill="#3b3b3b" text-anchor="middle" textLength="9.20" lengthAdjust="spacingAndGlyphs" >51</text>
<text x="7.80" y="797.24" font-size="9.2" fill="#3b3b3b" text-anchor="middle" textLength="9.20" lengthAdjust="spacingAndGlyphs" >52</text>
<text x="7.80" y="809.12" font-size="9.2" fill="#3b3b3b" text-anchor="middle" textLength="9.20" lengthAdjust="spacingAndGlyphs" >53</text>
<text x="7.80" y="821.01" font-size="9.2" fill="#3b3b3b" text-anchor="middle" textLength="9.20" lengthAdjust="spacingAndGlyphs" >54</text>
<rect x="526.05" y="183.00" width="2.55" height="320.00" fill="#6f6f6f" />
<rect x="526.10" y="503.00" width="2.40" height="318.00" fill="#1c1c1c" />
<rect x="16.00" y="502.20" width="1023.00" height="2.00" fill="#1c1c1c" />
<rect x="1036.90" y="183.00" width="1.30" height="638.00" fill="#444444" />
<rect x="1586.40" y="167.50" width="12.60" height="653.00" fill="#f5f5f5" rx="6.3" />
<path d="M1588.8 178.9 L1592.5 173.6 L1596.2 178.9 Z" fill="#6a6a6a" />
<rect x="1589.00" y="183.00" width="7.00" height="200.50" fill="#727272" rx="3.5" />
<path d="M1588.2 811.8 L1592.5 818.4 L1596.8 811.8 Z" fill="#5f5f5f" />
<line x1="65.50" y1="214.50" x2="517.00" y2="214.50" stroke="#e3e8ef" stroke-width="1.15" />
<text x="23.30" y="217.00" font-size="7.3" fill="#414f65" textLength="33.40" lengthAdjust="spacingAndGlyphs" >$1,800,000</text>
<line x1="65.50" y1="243.16" x2="517.00" y2="243.16" stroke="#e3e8ef" stroke-width="1.15" />
<text x="23.30" y="245.66" font-size="7.3" fill="#414f65" textLength="33.40" lengthAdjust="spacingAndGlyphs" >$1,600,000</text>
<line x1="65.50" y1="271.81" x2="517.00" y2="271.81" stroke="#e3e8ef" stroke-width="1.15" />
<text x="23.30" y="274.31" font-size="7.3" fill="#414f65" textLength="33.40" lengthAdjust="spacingAndGlyphs" >$1,400,000</text>
<line x1="65.50" y1="300.47" x2="517.00" y2="300.47" stroke="#e3e8ef" stroke-width="1.15" />
<text x="23.30" y="302.97" font-size="7.3" fill="#414f65" textLength="33.40" lengthAdjust="spacingAndGlyphs" >$1,200,000</text>
<line x1="65.50" y1="329.12" x2="517.00" y2="329.12" stroke="#e3e8ef" stroke-width="1.15" />
<text x="23.30" y="331.62" font-size="7.3" fill="#414f65" textLength="33.40" lengthAdjust="spacingAndGlyphs" >$1,000,000</text>
<line x1="65.50" y1="357.77" x2="517.00" y2="357.77" stroke="#e3e8ef" stroke-width="1.15" />
<text x="28.85" y="360.27" font-size="7.3" fill="#414f65" textLength="27.85" lengthAdjust="spacingAndGlyphs" >$800,000</text>
<line x1="65.50" y1="386.43" x2="517.00" y2="386.43" stroke="#e3e8ef" stroke-width="1.15" />
<text x="28.85" y="388.93" font-size="7.3" fill="#414f65" textLength="27.85" lengthAdjust="spacingAndGlyphs" >$600,000</text>
<line x1="65.50" y1="415.09" x2="517.00" y2="415.09" stroke="#e3e8ef" stroke-width="1.15" />
<text x="28.85" y="417.59" font-size="7.3" fill="#414f65" textLength="27.85" lengthAdjust="spacingAndGlyphs" >$400,000</text>
<line x1="65.50" y1="443.74" x2="517.00" y2="443.74" stroke="#e3e8ef" stroke-width="1.15" />
<text x="28.85" y="446.24" font-size="7.3" fill="#414f65" textLength="27.85" lengthAdjust="spacingAndGlyphs" >$200,000</text>
<line x1="65.50" y1="472.39" x2="517.00" y2="472.39" stroke="#e3e8ef" stroke-width="1.15" />
<text x="54.10" y="474.19" font-size="7.3" fill="#414f65" >-</text>
<rect x="69.49" y="455.60" width="22.12" height="16.80" fill="#2e75b6" stroke="#f6f8fb" stroke-width="0.7" stroke-opacity="0.75"/>
<text x="71.62" y="449.80" font-size="7.4" fill="#414f65" font-weight="bold" textLength="17.86" lengthAdjust="spacingAndGlyphs" >$.1 M</text>
<g transform="translate(81.55 483.90) rotate(-30)"><text x="-19.54" y="0" font-size="7.4" font-weight="bold" fill="#414f65" stroke="#414f65" stroke-width="0.22" textLength="19.54" lengthAdjust="spacingAndGlyphs">Year 1</text></g>
<rect x="99.59" y="404.40" width="22.12" height="68.00" fill="#2e75b6" stroke="#f6f8fb" stroke-width="0.7" stroke-opacity="0.75"/>
<text x="101.72" y="398.60" font-size="7.4" fill="#414f65" font-weight="bold" textLength="17.86" lengthAdjust="spacingAndGlyphs" >$.5 M</text>
<g transform="translate(111.65 483.90) rotate(-30)"><text x="-19.54" y="0" font-size="7.4" font-weight="bold" fill="#414f65" stroke="#414f65" stroke-width="0.22" textLength="19.54" lengthAdjust="spacingAndGlyphs">Year 2</text></g>
<rect x="129.69" y="322.50" width="22.12" height="149.90" fill="#2e75b6" stroke="#f6f8fb" stroke-width="0.7" stroke-opacity="0.75"/>
<text x="129.92" y="316.70" font-size="7.4" fill="#414f65" font-weight="bold" textLength="21.66" lengthAdjust="spacingAndGlyphs" >$1.0 M</text>
<g transform="translate(141.75 483.90) rotate(-30)"><text x="-19.54" y="0" font-size="7.4" font-weight="bold" fill="#414f65" stroke="#414f65" stroke-width="0.22" textLength="19.54" lengthAdjust="spacingAndGlyphs">Year 3</text></g>
<rect x="159.79" y="309.70" width="22.12" height="162.70" fill="#2e75b6" stroke="#f6f8fb" stroke-width="0.7" stroke-opacity="0.75"/>
<text x="160.02" y="303.90" font-size="7.4" fill="#414f65" font-weight="bold" textLength="21.66" lengthAdjust="spacingAndGlyphs" >$1.1 M</text>
<g transform="translate(171.85 483.90) rotate(-30)"><text x="-19.54" y="0" font-size="7.4" font-weight="bold" fill="#414f65" stroke="#414f65" stroke-width="0.22" textLength="19.54" lengthAdjust="spacingAndGlyphs">Year 4</text></g>
<rect x="189.89" y="287.90" width="22.12" height="184.50" fill="#2e75b6" stroke="#f6f8fb" stroke-width="0.7" stroke-opacity="0.75"/>
<text x="190.12" y="282.10" font-size="7.4" fill="#414f65" font-weight="bold" textLength="21.66" lengthAdjust="spacingAndGlyphs" >$1.3 M</text>
<g transform="translate(201.95 483.90) rotate(-30)"><text x="-19.54" y="0" font-size="7.4" font-weight="bold" fill="#414f65" stroke="#414f65" stroke-width="0.22" textLength="19.54" lengthAdjust="spacingAndGlyphs">Year 5</text></g>
<rect x="219.99" y="266.10" width="22.12" height="206.30" fill="#2e75b6" stroke="#f6f8fb" stroke-width="0.7" stroke-opacity="0.75"/>
<text x="220.22" y="260.30" font-size="7.4" fill="#414f65" font-weight="bold" textLength="21.66" lengthAdjust="spacingAndGlyphs" >$1.4 M</text>
<g transform="translate(232.05 483.90) rotate(-30)"><text x="-19.54" y="0" font-size="7.4" font-weight="bold" fill="#414f65" stroke="#414f65" stroke-width="0.22" textLength="19.54" lengthAdjust="spacingAndGlyphs">Year 6</text></g>
<rect x="250.09" y="263.00" width="22.12" height="209.40" fill="#2e75b6" stroke="#f6f8fb" stroke-width="0.7" stroke-opacity="0.75"/>
<text x="250.32" y="257.20" font-size="7.4" fill="#414f65" font-weight="bold" textLength="21.66" lengthAdjust="spacingAndGlyphs" >$1.5 M</text>
<g transform="translate(262.15 483.90) rotate(-30)"><text x="-19.54" y="0" font-size="7.4" font-weight="bold" fill="#414f65" stroke="#414f65" stroke-width="0.22" textLength="19.54" lengthAdjust="spacingAndGlyphs">Year 7</text></g>
<rect x="280.19" y="259.90" width="22.12" height="212.50" fill="#2e75b6" stroke="#f6f8fb" stroke-width="0.7" stroke-opacity="0.75"/>
<text x="280.42" y="254.10" font-size="7.4" fill="#414f65" font-weight="bold" textLength="21.66" lengthAdjust="spacingAndGlyphs" >$1.5 M</text>
<g transform="translate(292.25 483.90) rotate(-30)"><text x="-19.54" y="0" font-size="7.4" font-weight="bold" fill="#414f65" stroke="#414f65" stroke-width="0.22" textLength="19.54" lengthAdjust="spacingAndGlyphs">Year 8</text></g>
<rect x="310.29" y="256.80" width="22.12" height="215.60" fill="#2e75b6" stroke="#f6f8fb" stroke-width="0.7" stroke-opacity="0.75"/>
<text x="310.52" y="251.00" font-size="7.4" fill="#414f65" font-weight="bold" textLength="21.66" lengthAdjust="spacingAndGlyphs" >$1.5 M</text>
<g transform="translate(322.35 483.90) rotate(-30)"><text x="-19.54" y="0" font-size="7.4" font-weight="bold" fill="#414f65" stroke="#414f65" stroke-width="0.22" textLength="19.54" lengthAdjust="spacingAndGlyphs">Year 9</text></g>
<rect x="340.39" y="253.30" width="22.12" height="219.10" fill="#2e75b6" stroke="#f6f8fb" stroke-width="0.7" stroke-opacity="0.75"/>
<text x="340.62" y="247.50" font-size="7.4" fill="#414f65" font-weight="bold" textLength="21.66" lengthAdjust="spacingAndGlyphs" >$1.5 M</text>
<g transform="translate(352.45 483.90) rotate(-30)"><text x="-23.34" y="0" font-size="7.4" font-weight="bold" fill="#414f65" stroke="#414f65" stroke-width="0.22" textLength="23.34" lengthAdjust="spacingAndGlyphs">Year 10</text></g>
<rect x="370.49" y="250.20" width="22.12" height="222.20" fill="#2e75b6" stroke="#f6f8fb" stroke-width="0.7" stroke-opacity="0.75"/>
<text x="370.72" y="244.40" font-size="7.4" fill="#414f65" font-weight="bold" textLength="21.66" lengthAdjust="spacingAndGlyphs" >$1.6 M</text>
<g transform="translate(382.55 483.90) rotate(-30)"><text x="-23.34" y="0" font-size="7.4" font-weight="bold" fill="#414f65" stroke="#414f65" stroke-width="0.22" textLength="23.34" lengthAdjust="spacingAndGlyphs">Year 11</text></g>
<rect x="400.59" y="246.70" width="22.12" height="225.70" fill="#2e75b6" stroke="#f6f8fb" stroke-width="0.7" stroke-opacity="0.75"/>
<text x="400.82" y="240.90" font-size="7.4" fill="#414f65" font-weight="bold" textLength="21.66" lengthAdjust="spacingAndGlyphs" >$1.6 M</text>
<g transform="translate(412.65 483.90) rotate(-30)"><text x="-23.34" y="0" font-size="7.4" font-weight="bold" fill="#414f65" stroke="#414f65" stroke-width="0.22" textLength="23.34" lengthAdjust="spacingAndGlyphs">Year 12</text></g>
<rect x="430.69" y="243.20" width="22.12" height="229.20" fill="#2e75b6" stroke="#f6f8fb" stroke-width="0.7" stroke-opacity="0.75"/>
<text x="430.92" y="237.40" font-size="7.4" fill="#414f65" font-weight="bold" textLength="21.66" lengthAdjust="spacingAndGlyphs" >$1.6 M</text>
<g transform="translate(442.75 483.90) rotate(-30)"><text x="-23.34" y="0" font-size="7.4" font-weight="bold" fill="#414f65" stroke="#414f65" stroke-width="0.22" textLength="23.34" lengthAdjust="spacingAndGlyphs">Year 13</text></g>
<rect x="460.79" y="240.10" width="22.12" height="232.30" fill="#2e75b6" stroke="#f6f8fb" stroke-width="0.7" stroke-opacity="0.75"/>
<text x="461.02" y="234.30" font-size="7.4" fill="#414f65" font-weight="bold" textLength="21.66" lengthAdjust="spacingAndGlyphs" >$1.6 M</text>
<g transform="translate(472.85 483.90) rotate(-30)"><text x="-23.34" y="0" font-size="7.4" font-weight="bold" fill="#414f65" stroke="#414f65" stroke-width="0.22" textLength="23.34" lengthAdjust="spacingAndGlyphs">Year 14</text></g>
<rect x="490.89" y="236.20" width="22.12" height="236.20" fill="#2e75b6" stroke="#f6f8fb" stroke-width="0.7" stroke-opacity="0.75"/>
<text x="491.12" y="230.40" font-size="7.4" fill="#414f65" font-weight="bold" textLength="21.66" lengthAdjust="spacingAndGlyphs" >$1.6 M</text>
<g transform="translate(502.95 483.90) rotate(-30)"><text x="-23.34" y="0" font-size="7.4" font-weight="bold" fill="#414f65" stroke="#414f65" stroke-width="0.22" textLength="23.34" lengthAdjust="spacingAndGlyphs">Year 15</text></g>
<text x="230.00" y="200.80" font-size="11.3" fill="#3d4c63" font-weight="bold" textLength="81.50" lengthAdjust="spacingAndGlyphs" >Gross Revenue</text>
<line x1="577.00" y1="214.50" x2="1028.50" y2="214.50" stroke="#e3e8ef" stroke-width="1.15" />
<text x="534.30" y="217.00" font-size="7.3" fill="#414f65" textLength="33.40" lengthAdjust="spacingAndGlyphs" >$1,400,000</text>
<line x1="577.00" y1="246.72" x2="1028.50" y2="246.72" stroke="#e3e8ef" stroke-width="1.15" />
<text x="534.30" y="249.22" font-size="7.3" fill="#414f65" textLength="33.40" lengthAdjust="spacingAndGlyphs" >$1,200,000</text>
<line x1="577.00" y1="278.94" x2="1028.50" y2="278.94" stroke="#e3e8ef" stroke-width="1.15" />
<text x="534.30" y="281.44" font-size="7.3" fill="#414f65" textLength="33.40" lengthAdjust="spacingAndGlyphs" >$1,000,000</text>
<line x1="577.00" y1="311.16" x2="1028.50" y2="311.16" stroke="#e3e8ef" stroke-width="1.15" />
<text x="539.85" y="313.66" font-size="7.3" fill="#414f65" textLength="27.85" lengthAdjust="spacingAndGlyphs" >$800,000</text>
<line x1="577.00" y1="343.38" x2="1028.50" y2="343.38" stroke="#e3e8ef" stroke-width="1.15" />
<text x="539.85" y="345.88" font-size="7.3" fill="#414f65" textLength="27.85" lengthAdjust="spacingAndGlyphs" >$600,000</text>
<line x1="577.00" y1="375.60" x2="1028.50" y2="375.60" stroke="#e3e8ef" stroke-width="1.15" />
<text x="539.85" y="378.10" font-size="7.3" fill="#414f65" textLength="27.85" lengthAdjust="spacingAndGlyphs" >$400,000</text>
<line x1="577.00" y1="407.82" x2="1028.50" y2="407.82" stroke="#e3e8ef" stroke-width="1.15" />
<text x="539.85" y="410.32" font-size="7.3" fill="#414f65" textLength="27.85" lengthAdjust="spacingAndGlyphs" >$200,000</text>
<line x1="577.00" y1="440.04" x2="1028.50" y2="440.04" stroke="#e3e8ef" stroke-width="1.15" />
<text x="565.10" y="441.84" font-size="7.3" fill="#414f65" >-</text>
<line x1="577.00" y1="472.26" x2="1028.50" y2="472.26" stroke="#e3e8ef" stroke-width="1.15" />
<text x="537.63" y="474.76" font-size="7.3" fill="#414f65" textLength="32.29" lengthAdjust="spacingAndGlyphs" >($200,000)</text>
<rect x="580.99" y="440.20" width="22.12" height="1.80" fill="#2e75b6" stroke="#f6f8fb" stroke-width="0.7" stroke-opacity="0.75"/>
<text x="583.12" y="452.60" font-size="7.4" fill="#414f65" font-weight="bold" textLength="17.86" lengthAdjust="spacingAndGlyphs" >$.0 M</text>
<g transform="translate(593.05 483.90) rotate(-30)"><text x="-19.54" y="0" font-size="7.4" font-weight="bold" fill="#414f65" stroke="#414f65" stroke-width="0.22" textLength="19.54" lengthAdjust="spacingAndGlyphs">Year 1</text></g>
<rect x="611.09" y="405.50" width="22.12" height="34.70" fill="#2e75b6" stroke="#f6f8fb" stroke-width="0.7" stroke-opacity="0.75"/>
<text x="613.22" y="399.70" font-size="7.4" fill="#414f65" font-weight="bold" textLength="17.86" lengthAdjust="spacingAndGlyphs" >$.2 M</text>
<g transform="translate(623.15 483.90) rotate(-30)"><text x="-19.54" y="0" font-size="7.4" font-weight="bold" fill="#414f65" stroke="#414f65" stroke-width="0.22" textLength="19.54" lengthAdjust="spacingAndGlyphs">Year 2</text></g>
<rect x="641.19" y="325.60" width="22.12" height="114.60" fill="#2e75b6" stroke="#f6f8fb" stroke-width="0.7" stroke-opacity="0.75"/>
<text x="643.32" y="319.80" font-size="7.4" fill="#414f65" font-weight="bold" textLength="17.86" lengthAdjust="spacingAndGlyphs" >$.7 M</text>
<g transform="translate(653.25 483.90) rotate(-30)"><text x="-19.54" y="0" font-size="7.4" font-weight="bold" fill="#414f65" stroke="#414f65" stroke-width="0.22" textLength="19.54" lengthAdjust="spacingAndGlyphs">Year 3</text></g>
<rect x="671.29" y="314.40" width="22.12" height="125.80" fill="#2e75b6" stroke="#f6f8fb" stroke-width="0.7" stroke-opacity="0.75"/>
<text x="673.42" y="308.60" font-size="7.4" fill="#414f65" font-weight="bold" textLength="17.86" lengthAdjust="spacingAndGlyphs" >$.8 M</text>
<g transform="translate(683.35 483.90) rotate(-30)"><text x="-19.54" y="0" font-size="7.4" font-weight="bold" fill="#414f65" stroke="#414f65" stroke-width="0.22" textLength="19.54" lengthAdjust="spacingAndGlyphs">Year 4</text></g>
<rect x="701.39" y="293.70" width="22.12" height="146.50" fill="#2e75b6" stroke="#f6f8fb" stroke-width="0.7" stroke-opacity="0.75"/>
<text x="703.52" y="287.90" font-size="7.4" fill="#414f65" font-weight="bold" textLength="17.86" lengthAdjust="spacingAndGlyphs" >$.9 M</text>
<g transform="translate(713.45 483.90) rotate(-30)"><text x="-19.54" y="0" font-size="7.4" font-weight="bold" fill="#414f65" stroke="#414f65" stroke-width="0.22" textLength="19.54" lengthAdjust="spacingAndGlyphs">Year 5</text></g>
<rect x="731.49" y="273.10" width="22.12" height="167.10" fill="#2e75b6" stroke="#f6f8fb" stroke-width="0.7" stroke-opacity="0.75"/>
<text x="731.72" y="267.30" font-size="7.4" fill="#414f65" font-weight="bold" textLength="21.66" lengthAdjust="spacingAndGlyphs" >$1.0 M</text>
<g transform="translate(743.55 483.90) rotate(-30)"><text x="-19.54" y="0" font-size="7.4" font-weight="bold" fill="#414f65" stroke="#414f65" stroke-width="0.22" textLength="19.54" lengthAdjust="spacingAndGlyphs">Year 6</text></g>
<rect x="761.59" y="270.80" width="22.12" height="169.40" fill="#2e75b6" stroke="#f6f8fb" stroke-width="0.7" stroke-opacity="0.75"/>
<text x="761.82" y="265.00" font-size="7.4" fill="#414f65" font-weight="bold" textLength="21.66" lengthAdjust="spacingAndGlyphs" >$1.1 M</text>
<g transform="translate(773.65 483.90) rotate(-30)"><text x="-19.54" y="0" font-size="7.4" font-weight="bold" fill="#414f65" stroke="#414f65" stroke-width="0.22" textLength="19.54" lengthAdjust="spacingAndGlyphs">Year 7</text></g>
<rect x="791.69" y="268.10" width="22.12" height="172.10" fill="#2e75b6" stroke="#f6f8fb" stroke-width="0.7" stroke-opacity="0.75"/>
<text x="791.92" y="262.30" font-size="7.4" fill="#414f65" font-weight="bold" textLength="21.66" lengthAdjust="spacingAndGlyphs" >$1.1 M</text>
<g transform="translate(803.75 483.90) rotate(-30)"><text x="-19.54" y="0" font-size="7.4" font-weight="bold" fill="#414f65" stroke="#414f65" stroke-width="0.22" textLength="19.54" lengthAdjust="spacingAndGlyphs">Year 8</text></g>
<rect x="821.79" y="266.10" width="22.12" height="174.10" fill="#2e75b6" stroke="#f6f8fb" stroke-width="0.7" stroke-opacity="0.75"/>
<text x="822.02" y="260.30" font-size="7.4" fill="#414f65" font-weight="bold" textLength="21.66" lengthAdjust="spacingAndGlyphs" >$1.1 M</text>
<g transform="translate(833.85 483.90) rotate(-30)"><text x="-19.54" y="0" font-size="7.4" font-weight="bold" fill="#414f65" stroke="#414f65" stroke-width="0.22" textLength="19.54" lengthAdjust="spacingAndGlyphs">Year 9</text></g>
<rect x="851.89" y="263.80" width="22.12" height="176.40" fill="#2e75b6" stroke="#f6f8fb" stroke-width="0.7" stroke-opacity="0.75"/>
<text x="852.12" y="258.00" font-size="7.4" fill="#414f65" font-weight="bold" textLength="21.66" lengthAdjust="spacingAndGlyphs" >$1.1 M</text>
<g transform="translate(863.95 483.90) rotate(-30)"><text x="-23.34" y="0" font-size="7.4" font-weight="bold" fill="#414f65" stroke="#414f65" stroke-width="0.22" textLength="23.34" lengthAdjust="spacingAndGlyphs">Year 10</text></g>
<rect x="881.99" y="261.10" width="22.12" height="179.10" fill="#2e75b6" stroke="#f6f8fb" stroke-width="0.7" stroke-opacity="0.75"/>
<text x="882.22" y="255.30" font-size="7.4" fill="#414f65" font-weight="bold" textLength="21.66" lengthAdjust="spacingAndGlyphs" >$1.1 M</text>
<g transform="translate(894.05 483.90) rotate(-30)"><text x="-23.34" y="0" font-size="7.4" font-weight="bold" fill="#414f65" stroke="#414f65" stroke-width="0.22" textLength="23.34" lengthAdjust="spacingAndGlyphs">Year 11</text></g>
<rect x="912.09" y="258.80" width="22.12" height="181.40" fill="#2e75b6" stroke="#f6f8fb" stroke-width="0.7" stroke-opacity="0.75"/>
<text x="912.32" y="253.00" font-size="7.4" fill="#414f65" font-weight="bold" textLength="21.66" lengthAdjust="spacingAndGlyphs" >$1.1 M</text>
<g transform="translate(924.15 483.90) rotate(-30)"><text x="-23.34" y="0" font-size="7.4" font-weight="bold" fill="#414f65" stroke="#414f65" stroke-width="0.22" textLength="23.34" lengthAdjust="spacingAndGlyphs">Year 12</text></g>
<rect x="942.19" y="256.00" width="22.12" height="184.20" fill="#2e75b6" stroke="#f6f8fb" stroke-width="0.7" stroke-opacity="0.75"/>
<text x="942.42" y="250.20" font-size="7.4" fill="#414f65" font-weight="bold" textLength="21.66" lengthAdjust="spacingAndGlyphs" >$1.1 M</text>
<g transform="translate(954.25 483.90) rotate(-30)"><text x="-23.34" y="0" font-size="7.4" font-weight="bold" fill="#414f65" stroke="#414f65" stroke-width="0.22" textLength="23.34" lengthAdjust="spacingAndGlyphs">Year 13</text></g>
<rect x="972.29" y="253.70" width="22.12" height="186.50" fill="#2e75b6" stroke="#f6f8fb" stroke-width="0.7" stroke-opacity="0.75"/>
<text x="972.52" y="247.90" font-size="7.4" fill="#414f65" font-weight="bold" textLength="21.66" lengthAdjust="spacingAndGlyphs" >$1.2 M</text>
<g transform="translate(984.35 483.90) rotate(-30)"><text x="-23.34" y="0" font-size="7.4" font-weight="bold" fill="#414f65" stroke="#414f65" stroke-width="0.22" textLength="23.34" lengthAdjust="spacingAndGlyphs">Year 14</text></g>
<rect x="1002.39" y="251.00" width="22.12" height="189.20" fill="#2e75b6" stroke="#f6f8fb" stroke-width="0.7" stroke-opacity="0.75"/>
<text x="1002.62" y="245.20" font-size="7.4" fill="#414f65" font-weight="bold" textLength="21.66" lengthAdjust="spacingAndGlyphs" >$1.2 M</text>
<g transform="translate(1014.45 483.90) rotate(-30)"><text x="-23.34" y="0" font-size="7.4" font-weight="bold" fill="#414f65" stroke="#414f65" stroke-width="0.22" textLength="23.34" lengthAdjust="spacingAndGlyphs">Year 15</text></g>
<text x="750.55" y="200.80" font-size="11.3" fill="#3d4c63" font-weight="bold" textLength="64.10" lengthAdjust="spacingAndGlyphs" >Gross Profit</text>
<line x1="62.80" y1="535.90" x2="517.30" y2="535.90" stroke="#e3e8ef" stroke-width="1.15" />
<text x="25.85" y="538.40" font-size="7.3" fill="#414f65" textLength="27.85" lengthAdjust="spacingAndGlyphs" >$900,000</text>
<line x1="62.80" y1="559.30" x2="517.30" y2="559.30" stroke="#e3e8ef" stroke-width="1.15" />
<text x="25.85" y="561.80" font-size="7.3" fill="#414f65" textLength="27.85" lengthAdjust="spacingAndGlyphs" >$800,000</text>
<line x1="62.80" y1="582.70" x2="517.30" y2="582.70" stroke="#e3e8ef" stroke-width="1.15" />
<text x="25.85" y="585.20" font-size="7.3" fill="#414f65" textLength="27.85" lengthAdjust="spacingAndGlyphs" >$700,000</text>
<line x1="62.80" y1="606.10" x2="517.30" y2="606.10" stroke="#e3e8ef" stroke-width="1.15" />
<text x="25.85" y="608.60" font-size="7.3" fill="#414f65" textLength="27.85" lengthAdjust="spacingAndGlyphs" >$600,000</text>
<line x1="62.80" y1="629.50" x2="517.30" y2="629.50" stroke="#e3e8ef" stroke-width="1.15" />
<text x="25.85" y="632.00" font-size="7.3" fill="#414f65" textLength="27.85" lengthAdjust="spacingAndGlyphs" >$500,000</text>
<line x1="62.80" y1="652.90" x2="517.30" y2="652.90" stroke="#e3e8ef" stroke-width="1.15" />
<text x="25.85" y="655.40" font-size="7.3" fill="#414f65" textLength="27.85" lengthAdjust="spacingAndGlyphs" >$400,000</text>
<line x1="62.80" y1="676.30" x2="517.30" y2="676.30" stroke="#e3e8ef" stroke-width="1.15" />
<text x="25.85" y="678.80" font-size="7.3" fill="#414f65" textLength="27.85" lengthAdjust="spacingAndGlyphs" >$300,000</text>
<line x1="62.80" y1="699.70" x2="517.30" y2="699.70" stroke="#e3e8ef" stroke-width="1.15" />
<text x="25.85" y="702.20" font-size="7.3" fill="#414f65" textLength="27.85" lengthAdjust="spacingAndGlyphs" >$200,000</text>
<line x1="62.80" y1="723.10" x2="517.30" y2="723.10" stroke="#e3e8ef" stroke-width="1.15" />
<text x="25.85" y="725.60" font-size="7.3" fill="#414f65" textLength="27.85" lengthAdjust="spacingAndGlyphs" >$100,000</text>
<line x1="62.80" y1="746.50" x2="517.30" y2="746.50" stroke="#e3e8ef" stroke-width="1.15" />
<text x="51.10" y="748.30" font-size="7.3" fill="#414f65" >-</text>
<line x1="62.80" y1="769.90" x2="517.30" y2="769.90" stroke="#e3e8ef" stroke-width="1.15" />
<text x="23.63" y="772.40" font-size="7.3" fill="#414f65" textLength="32.29" lengthAdjust="spacingAndGlyphs" >($100,000)</text>
<line x1="62.80" y1="793.30" x2="517.30" y2="793.30" stroke="#e3e8ef" stroke-width="1.15" />
<text x="23.63" y="795.80" font-size="7.3" fill="#414f65" textLength="32.29" lengthAdjust="spacingAndGlyphs" >($200,000)</text>
<rect x="66.81" y="747.20" width="22.27" height="17.20" fill="#2e75b6" stroke="#f6f8fb" stroke-width="0.7" stroke-opacity="0.75"/>
<text x="67.87" y="775.00" font-size="7.4" fill="#414f65" font-weight="bold" textLength="20.15" lengthAdjust="spacingAndGlyphs" >-$.1 M</text>
<g transform="translate(78.95 805.00) rotate(-30)"><text x="-19.54" y="0" font-size="7.4" font-weight="bold" fill="#414f65" stroke="#414f65" stroke-width="0.22" textLength="19.54" lengthAdjust="spacingAndGlyphs">Year 1</text></g>
<rect x="97.11" y="743.70" width="22.27" height="3.00" fill="#2e75b6" stroke="#f6f8fb" stroke-width="0.7" stroke-opacity="0.75"/>
<text x="99.32" y="737.90" font-size="7.4" fill="#414f65" font-weight="bold" textLength="17.86" lengthAdjust="spacingAndGlyphs" >$.0 M</text>
<g transform="translate(109.25 805.00) rotate(-30)"><text x="-19.54" y="0" font-size="7.4" font-weight="bold" fill="#414f65" stroke="#414f65" stroke-width="0.22" textLength="19.54" lengthAdjust="spacingAndGlyphs">Year 2</text></g>
<rect x="127.41" y="642.40" width="22.27" height="104.30" fill="#2e75b6" stroke="#f6f8fb" stroke-width="0.7" stroke-opacity="0.75"/>
<text x="129.62" y="636.60" font-size="7.4" fill="#414f65" font-weight="bold" textLength="17.86" lengthAdjust="spacingAndGlyphs" >$.4 M</text>
<g transform="translate(139.55 805.00) rotate(-30)"><text x="-19.54" y="0" font-size="7.4" font-weight="bold" fill="#414f65" stroke="#414f65" stroke-width="0.22" textLength="19.54" lengthAdjust="spacingAndGlyphs">Year 3</text></g>
<rect x="157.71" y="629.20" width="22.27" height="117.50" fill="#2e75b6" stroke="#f6f8fb" stroke-width="0.7" stroke-opacity="0.75"/>
<text x="159.92" y="623.40" font-size="7.4" fill="#414f65" font-weight="bold" textLength="17.86" lengthAdjust="spacingAndGlyphs" >$.5 M</text>
<g transform="translate(169.85 805.00) rotate(-30)"><text x="-19.54" y="0" font-size="7.4" font-weight="bold" fill="#414f65" stroke="#414f65" stroke-width="0.22" textLength="19.54" lengthAdjust="spacingAndGlyphs">Year 4</text></g>
<rect x="188.01" y="603.50" width="22.27" height="143.20" fill="#2e75b6" stroke="#f6f8fb" stroke-width="0.7" stroke-opacity="0.75"/>
<text x="190.22" y="597.70" font-size="7.4" fill="#414f65" font-weight="bold" textLength="17.86" lengthAdjust="spacingAndGlyphs" >$.6 M</text>
<g transform="translate(200.15 805.00) rotate(-30)"><text x="-19.54" y="0" font-size="7.4" font-weight="bold" fill="#414f65" stroke="#414f65" stroke-width="0.22" textLength="19.54" lengthAdjust="spacingAndGlyphs">Year 5</text></g>
<rect x="218.31" y="577.90" width="22.27" height="168.80" fill="#2e75b6" stroke="#f6f8fb" stroke-width="0.7" stroke-opacity="0.75"/>
<text x="220.52" y="572.10" font-size="7.4" fill="#414f65" font-weight="bold" textLength="17.86" lengthAdjust="spacingAndGlyphs" >$.7 M</text>
<g transform="translate(230.45 805.00) rotate(-30)"><text x="-19.54" y="0" font-size="7.4" font-weight="bold" fill="#414f65" stroke="#414f65" stroke-width="0.22" textLength="19.54" lengthAdjust="spacingAndGlyphs">Year 6</text></g>
<rect x="248.61" y="575.90" width="22.27" height="170.80" fill="#2e75b6" stroke="#f6f8fb" stroke-width="0.7" stroke-opacity="0.75"/>
<text x="250.82" y="570.10" font-size="7.4" fill="#414f65" font-weight="bold" textLength="17.86" lengthAdjust="spacingAndGlyphs" >$.7 M</text>
<g transform="translate(260.75 805.00) rotate(-30)"><text x="-19.54" y="0" font-size="7.4" font-weight="bold" fill="#414f65" stroke="#414f65" stroke-width="0.22" textLength="19.54" lengthAdjust="spacingAndGlyphs">Year 7</text></g>
<rect x="278.91" y="573.60" width="22.27" height="173.10" fill="#2e75b6" stroke="#f6f8fb" stroke-width="0.7" stroke-opacity="0.75"/>
<text x="281.12" y="567.80" font-size="7.4" fill="#414f65" font-weight="bold" textLength="17.86" lengthAdjust="spacingAndGlyphs" >$.7 M</text>
<g transform="translate(291.05 805.00) rotate(-30)"><text x="-19.54" y="0" font-size="7.4" font-weight="bold" fill="#414f65" stroke="#414f65" stroke-width="0.22" textLength="19.54" lengthAdjust="spacingAndGlyphs">Year 8</text></g>
<rect x="309.21" y="571.60" width="22.27" height="175.10" fill="#2e75b6" stroke="#f6f8fb" stroke-width="0.7" stroke-opacity="0.75"/>
<text x="311.42" y="565.80" font-size="7.4" fill="#414f65" font-weight="bold" textLength="17.86" lengthAdjust="spacingAndGlyphs" >$.7 M</text>
<g transform="translate(321.35 805.00) rotate(-30)"><text x="-19.54" y="0" font-size="7.4" font-weight="bold" fill="#414f65" stroke="#414f65" stroke-width="0.22" textLength="19.54" lengthAdjust="spacingAndGlyphs">Year 9</text></g>
<rect x="339.51" y="569.70" width="22.27" height="177.00" fill="#2e75b6" stroke="#f6f8fb" stroke-width="0.7" stroke-opacity="0.75"/>
<text x="341.72" y="563.90" font-size="7.4" fill="#414f65" font-weight="bold" textLength="17.86" lengthAdjust="spacingAndGlyphs" >$.8 M</text>
<g transform="translate(351.65 805.00) rotate(-30)"><text x="-23.34" y="0" font-size="7.4" font-weight="bold" fill="#414f65" stroke="#414f65" stroke-width="0.22" textLength="23.34" lengthAdjust="spacingAndGlyphs">Year 10</text></g>
<rect x="369.81" y="567.40" width="22.27" height="179.30" fill="#2e75b6" stroke="#f6f8fb" stroke-width="0.7" stroke-opacity="0.75"/>
<text x="372.02" y="561.60" font-size="7.4" fill="#414f65" font-weight="bold" textLength="17.86" lengthAdjust="spacingAndGlyphs" >$.8 M</text>
<g transform="translate(381.95 805.00) rotate(-30)"><text x="-23.34" y="0" font-size="7.4" font-weight="bold" fill="#414f65" stroke="#414f65" stroke-width="0.22" textLength="23.34" lengthAdjust="spacingAndGlyphs">Year 11</text></g>
<rect x="400.11" y="565.40" width="22.27" height="181.30" fill="#2e75b6" stroke="#f6f8fb" stroke-width="0.7" stroke-opacity="0.75"/>
<text x="402.32" y="559.60" font-size="7.4" fill="#414f65" font-weight="bold" textLength="17.86" lengthAdjust="spacingAndGlyphs" >$.8 M</text>
<g transform="translate(412.25 805.00) rotate(-30)"><text x="-23.34" y="0" font-size="7.4" font-weight="bold" fill="#414f65" stroke="#414f65" stroke-width="0.22" textLength="23.34" lengthAdjust="spacingAndGlyphs">Year 12</text></g>
<rect x="430.41" y="563.10" width="22.27" height="183.60" fill="#2e75b6" stroke="#f6f8fb" stroke-width="0.7" stroke-opacity="0.75"/>
<text x="432.62" y="557.30" font-size="7.4" fill="#414f65" font-weight="bold" textLength="17.86" lengthAdjust="spacingAndGlyphs" >$.8 M</text>
<g transform="translate(442.55 805.00) rotate(-30)"><text x="-23.34" y="0" font-size="7.4" font-weight="bold" fill="#414f65" stroke="#414f65" stroke-width="0.22" textLength="23.34" lengthAdjust="spacingAndGlyphs">Year 13</text></g>
<rect x="460.71" y="560.80" width="22.27" height="185.90" fill="#2e75b6" stroke="#f6f8fb" stroke-width="0.7" stroke-opacity="0.75"/>
<text x="462.92" y="555.00" font-size="7.4" fill="#414f65" font-weight="bold" textLength="17.86" lengthAdjust="spacingAndGlyphs" >$.8 M</text>
<g transform="translate(472.85 805.00) rotate(-30)"><text x="-23.34" y="0" font-size="7.4" font-weight="bold" fill="#414f65" stroke="#414f65" stroke-width="0.22" textLength="23.34" lengthAdjust="spacingAndGlyphs">Year 14</text></g>
<rect x="491.01" y="558.80" width="22.27" height="187.90" fill="#2e75b6" stroke="#f6f8fb" stroke-width="0.7" stroke-opacity="0.75"/>
<text x="493.22" y="553.00" font-size="7.4" fill="#414f65" font-weight="bold" textLength="17.86" lengthAdjust="spacingAndGlyphs" >$.8 M</text>
<g transform="translate(503.15 805.00) rotate(-30)"><text x="-23.34" y="0" font-size="7.4" font-weight="bold" fill="#414f65" stroke="#414f65" stroke-width="0.22" textLength="23.34" lengthAdjust="spacingAndGlyphs">Year 15</text></g>
<text x="250.80" y="522.30" font-size="11.3" fill="#3d4c63" font-weight="bold" textLength="40.00" lengthAdjust="spacingAndGlyphs" >EBITDA</text>
<line x1="576.80" y1="535.90" x2="1028.50" y2="535.90" stroke="#e3e8ef" stroke-width="1.15" />
<text x="534.30" y="537.90" font-size="7.3" fill="#414f65" textLength="33.40" lengthAdjust="spacingAndGlyphs" >$3,000,000</text>
<line x1="576.80" y1="572.75" x2="1028.50" y2="572.75" stroke="#e3e8ef" stroke-width="1.15" />
<text x="534.30" y="574.75" font-size="7.3" fill="#414f65" textLength="33.40" lengthAdjust="spacingAndGlyphs" >$2,500,000</text>
<line x1="576.80" y1="609.60" x2="1028.50" y2="609.60" stroke="#e3e8ef" stroke-width="1.15" />
<text x="534.30" y="611.60" font-size="7.3" fill="#414f65" textLength="33.40" lengthAdjust="spacingAndGlyphs" >$2,000,000</text>
<line x1="576.80" y1="646.45" x2="1028.50" y2="646.45" stroke="#e3e8ef" stroke-width="1.15" />
<text x="534.30" y="648.45" font-size="7.3" fill="#414f65" textLength="33.40" lengthAdjust="spacingAndGlyphs" >$1,500,000</text>
<line x1="576.80" y1="683.30" x2="1028.50" y2="683.30" stroke="#e3e8ef" stroke-width="1.15" />
<text x="534.30" y="685.30" font-size="7.3" fill="#414f65" textLength="33.40" lengthAdjust="spacingAndGlyphs" >$1,000,000</text>
<line x1="576.80" y1="720.15" x2="1028.50" y2="720.15" stroke="#e3e8ef" stroke-width="1.15" />
<text x="539.85" y="722.15" font-size="7.3" fill="#414f65" textLength="27.85" lengthAdjust="spacingAndGlyphs" >$500,000</text>
<line x1="576.80" y1="757.00" x2="1028.50" y2="757.00" stroke="#e3e8ef" stroke-width="1.15" />
<text x="565.10" y="758.80" font-size="7.3" fill="#414f65" >-</text>
<line x1="576.80" y1="793.85" x2="1028.50" y2="793.85" stroke="#e3e8ef" stroke-width="1.15" />
<text x="537.63" y="795.85" font-size="7.3" fill="#414f65" textLength="32.29" lengthAdjust="spacingAndGlyphs" >($500,000)</text>
<rect x="580.61" y="757.30" width="20.61" height="3.40" fill="#2e75b6" stroke="#f6f8fb" stroke-width="0.7" stroke-opacity="0.75"/>
<text x="580.84" y="771.30" font-size="7.4" fill="#414f65" font-weight="bold" textLength="20.15" lengthAdjust="spacingAndGlyphs" >-$.1 M</text>
<g transform="translate(591.92 805.00) rotate(-30)"><text x="-19.54" y="0" font-size="7.4" font-weight="bold" fill="#414f65" stroke="#414f65" stroke-width="0.22" textLength="19.54" lengthAdjust="spacingAndGlyphs">Year 0</text></g>
<rect x="608.84" y="757.30" width="20.61" height="10.70" fill="#2e75b6" stroke="#f6f8fb" stroke-width="0.7" stroke-opacity="0.75"/>
<text x="609.07" y="778.70" font-size="7.4" fill="#414f65" font-weight="bold" textLength="20.15" lengthAdjust="spacingAndGlyphs" >-$.2 M</text>
<g transform="translate(620.15 805.00) rotate(-30)"><text x="-19.54" y="0" font-size="7.4" font-weight="bold" fill="#414f65" stroke="#414f65" stroke-width="0.22" textLength="19.54" lengthAdjust="spacingAndGlyphs">Year 1</text></g>
<text x="638.45" y="768.30" font-size="7.4" fill="#414f65" font-weight="bold" textLength="17.86" lengthAdjust="spacingAndGlyphs" >$.0 M</text>
<g transform="translate(648.38 805.00) rotate(-30)"><text x="-19.54" y="0" font-size="7.4" font-weight="bold" fill="#414f65" stroke="#414f65" stroke-width="0.22" textLength="19.54" lengthAdjust="spacingAndGlyphs">Year 2</text></g>
<rect x="665.30" y="732.90" width="20.61" height="24.10" fill="#2e75b6" stroke="#f6f8fb" stroke-width="0.7" stroke-opacity="0.75"/>
<text x="666.68" y="727.10" font-size="7.4" fill="#414f65" font-weight="bold" textLength="17.86" lengthAdjust="spacingAndGlyphs" >$.3 M</text>
<g transform="translate(676.61 805.00) rotate(-30)"><text x="-19.54" y="0" font-size="7.4" font-weight="bold" fill="#414f65" stroke="#414f65" stroke-width="0.22" textLength="19.54" lengthAdjust="spacingAndGlyphs">Year 3</text></g>
<rect x="693.54" y="729.90" width="20.61" height="27.10" fill="#2e75b6" stroke="#f6f8fb" stroke-width="0.7" stroke-opacity="0.75"/>
<text x="694.91" y="724.10" font-size="7.4" fill="#414f65" font-weight="bold" textLength="17.86" lengthAdjust="spacingAndGlyphs" >$.4 M</text>
<g transform="translate(704.84 805.00) rotate(-30)"><text x="-19.54" y="0" font-size="7.4" font-weight="bold" fill="#414f65" stroke="#414f65" stroke-width="0.22" textLength="19.54" lengthAdjust="spacingAndGlyphs">Year 4</text></g>
<rect x="721.77" y="724.10" width="20.61" height="32.90" fill="#2e75b6" stroke="#f6f8fb" stroke-width="0.7" stroke-opacity="0.75"/>
<text x="723.14" y="718.30" font-size="7.4" fill="#414f65" font-weight="bold" textLength="17.86" lengthAdjust="spacingAndGlyphs" >$.4 M</text>
<g transform="translate(733.07 805.00) rotate(-30)"><text x="-19.54" y="0" font-size="7.4" font-weight="bold" fill="#414f65" stroke="#414f65" stroke-width="0.22" textLength="19.54" lengthAdjust="spacingAndGlyphs">Year 5</text></g>
<rect x="750.00" y="717.80" width="20.61" height="39.20" fill="#2e75b6" stroke="#f6f8fb" stroke-width="0.7" stroke-opacity="0.75"/>
<text x="751.37" y="712.00" font-size="7.4" fill="#414f65" font-weight="bold" textLength="17.86" lengthAdjust="spacingAndGlyphs" >$.5 M</text>
<g transform="translate(761.30 805.00) rotate(-30)"><text x="-19.54" y="0" font-size="7.4" font-weight="bold" fill="#414f65" stroke="#414f65" stroke-width="0.22" textLength="19.54" lengthAdjust="spacingAndGlyphs">Year 6</text></g>
<rect x="778.23" y="717.40" width="20.61" height="39.60" fill="#2e75b6" stroke="#f6f8fb" stroke-width="0.7" stroke-opacity="0.75"/>
<text x="779.61" y="711.60" font-size="7.4" fill="#414f65" font-weight="bold" textLength="17.86" lengthAdjust="spacingAndGlyphs" >$.5 M</text>
<g transform="translate(789.53 805.00) rotate(-30)"><text x="-19.54" y="0" font-size="7.4" font-weight="bold" fill="#414f65" stroke="#414f65" stroke-width="0.22" textLength="19.54" lengthAdjust="spacingAndGlyphs">Year 7</text></g>
<rect x="806.46" y="717.40" width="20.61" height="39.60" fill="#2e75b6" stroke="#f6f8fb" stroke-width="0.7" stroke-opacity="0.75"/>
<text x="807.84" y="711.60" font-size="7.4" fill="#414f65" font-weight="bold" textLength="17.86" lengthAdjust="spacingAndGlyphs" >$.5 M</text>
<g transform="translate(817.77 805.00) rotate(-30)"><text x="-19.54" y="0" font-size="7.4" font-weight="bold" fill="#414f65" stroke="#414f65" stroke-width="0.22" textLength="19.54" lengthAdjust="spacingAndGlyphs">Year 8</text></g>
<rect x="834.69" y="717.00" width="20.61" height="40.00" fill="#2e75b6" stroke="#f6f8fb" stroke-width="0.7" stroke-opacity="0.75"/>
<text x="836.07" y="711.20" font-size="7.4" fill="#414f65" font-weight="bold" textLength="17.86" lengthAdjust="spacingAndGlyphs" >$.5 M</text>
<g transform="translate(846.00 805.00) rotate(-30)"><text x="-19.54" y="0" font-size="7.4" font-weight="bold" fill="#414f65" stroke="#414f65" stroke-width="0.22" textLength="19.54" lengthAdjust="spacingAndGlyphs">Year 9</text></g>
<rect x="862.92" y="716.70" width="20.61" height="40.30" fill="#2e75b6" stroke="#f6f8fb" stroke-width="0.7" stroke-opacity="0.75"/>
<text x="864.30" y="710.90" font-size="7.4" fill="#414f65" font-weight="bold" textLength="17.86" lengthAdjust="spacingAndGlyphs" >$.5 M</text>
<g transform="translate(874.23 805.00) rotate(-30)"><text x="-23.34" y="0" font-size="7.4" font-weight="bold" fill="#414f65" stroke="#414f65" stroke-width="0.22" textLength="23.34" lengthAdjust="spacingAndGlyphs">Year 10</text></g>
<rect x="891.15" y="716.30" width="20.61" height="40.70" fill="#2e75b6" stroke="#f6f8fb" stroke-width="0.7" stroke-opacity="0.75"/>
<text x="892.53" y="710.50" font-size="7.4" fill="#414f65" font-weight="bold" textLength="17.86" lengthAdjust="spacingAndGlyphs" >$.6 M</text>
<g transform="translate(902.46 805.00) rotate(-30)"><text x="-23.34" y="0" font-size="7.4" font-weight="bold" fill="#414f65" stroke="#414f65" stroke-width="0.22" textLength="23.34" lengthAdjust="spacingAndGlyphs">Year 11</text></g>
<rect x="919.39" y="715.50" width="20.61" height="41.50" fill="#2e75b6" stroke="#f6f8fb" stroke-width="0.7" stroke-opacity="0.75"/>
<text x="920.76" y="709.70" font-size="7.4" fill="#414f65" font-weight="bold" textLength="17.86" lengthAdjust="spacingAndGlyphs" >$.6 M</text>
<g transform="translate(930.69 805.00) rotate(-30)"><text x="-23.34" y="0" font-size="7.4" font-weight="bold" fill="#414f65" stroke="#414f65" stroke-width="0.22" textLength="23.34" lengthAdjust="spacingAndGlyphs">Year 12</text></g>
<rect x="947.62" y="724.10" width="20.61" height="32.90" fill="#2e75b6" stroke="#f6f8fb" stroke-width="0.7" stroke-opacity="0.75"/>
<text x="948.99" y="718.30" font-size="7.4" fill="#414f65" font-weight="bold" textLength="17.86" lengthAdjust="spacingAndGlyphs" >$.4 M</text>
<g transform="translate(958.92 805.00) rotate(-30)"><text x="-23.34" y="0" font-size="7.4" font-weight="bold" fill="#414f65" stroke="#414f65" stroke-width="0.22" textLength="23.34" lengthAdjust="spacingAndGlyphs">Year 13</text></g>
<rect x="975.85" y="713.20" width="20.61" height="43.80" fill="#2e75b6" stroke="#f6f8fb" stroke-width="0.7" stroke-opacity="0.75"/>
<text x="977.22" y="707.40" font-size="7.4" fill="#414f65" font-weight="bold" textLength="17.86" lengthAdjust="spacingAndGlyphs" >$.6 M</text>
<g transform="translate(987.15 805.00) rotate(-30)"><text x="-23.34" y="0" font-size="7.4" font-weight="bold" fill="#414f65" stroke="#414f65" stroke-width="0.22" textLength="23.34" lengthAdjust="spacingAndGlyphs">Year 14</text></g>
<rect x="1004.08" y="577.90" width="20.61" height="179.10" fill="#2e75b6" stroke="#f6f8fb" stroke-width="0.7" stroke-opacity="0.75"/>
<text x="1003.55" y="572.10" font-size="7.4" fill="#414f65" font-weight="bold" textLength="21.66" lengthAdjust="spacingAndGlyphs" >$2.4 M</text>
<g transform="translate(1015.38 805.00) rotate(-30)"><text x="-23.34" y="0" font-size="7.4" font-weight="bold" fill="#414f65" stroke="#414f65" stroke-width="0.22" textLength="23.34" lengthAdjust="spacingAndGlyphs">Year 15</text></g>
<text x="754.10" y="522.30" font-size="11.3" fill="#3d4c63" font-weight="bold" textLength="55.40" lengthAdjust="spacingAndGlyphs" >Cash Flow</text>
</svg>
</div>
</body></html>
